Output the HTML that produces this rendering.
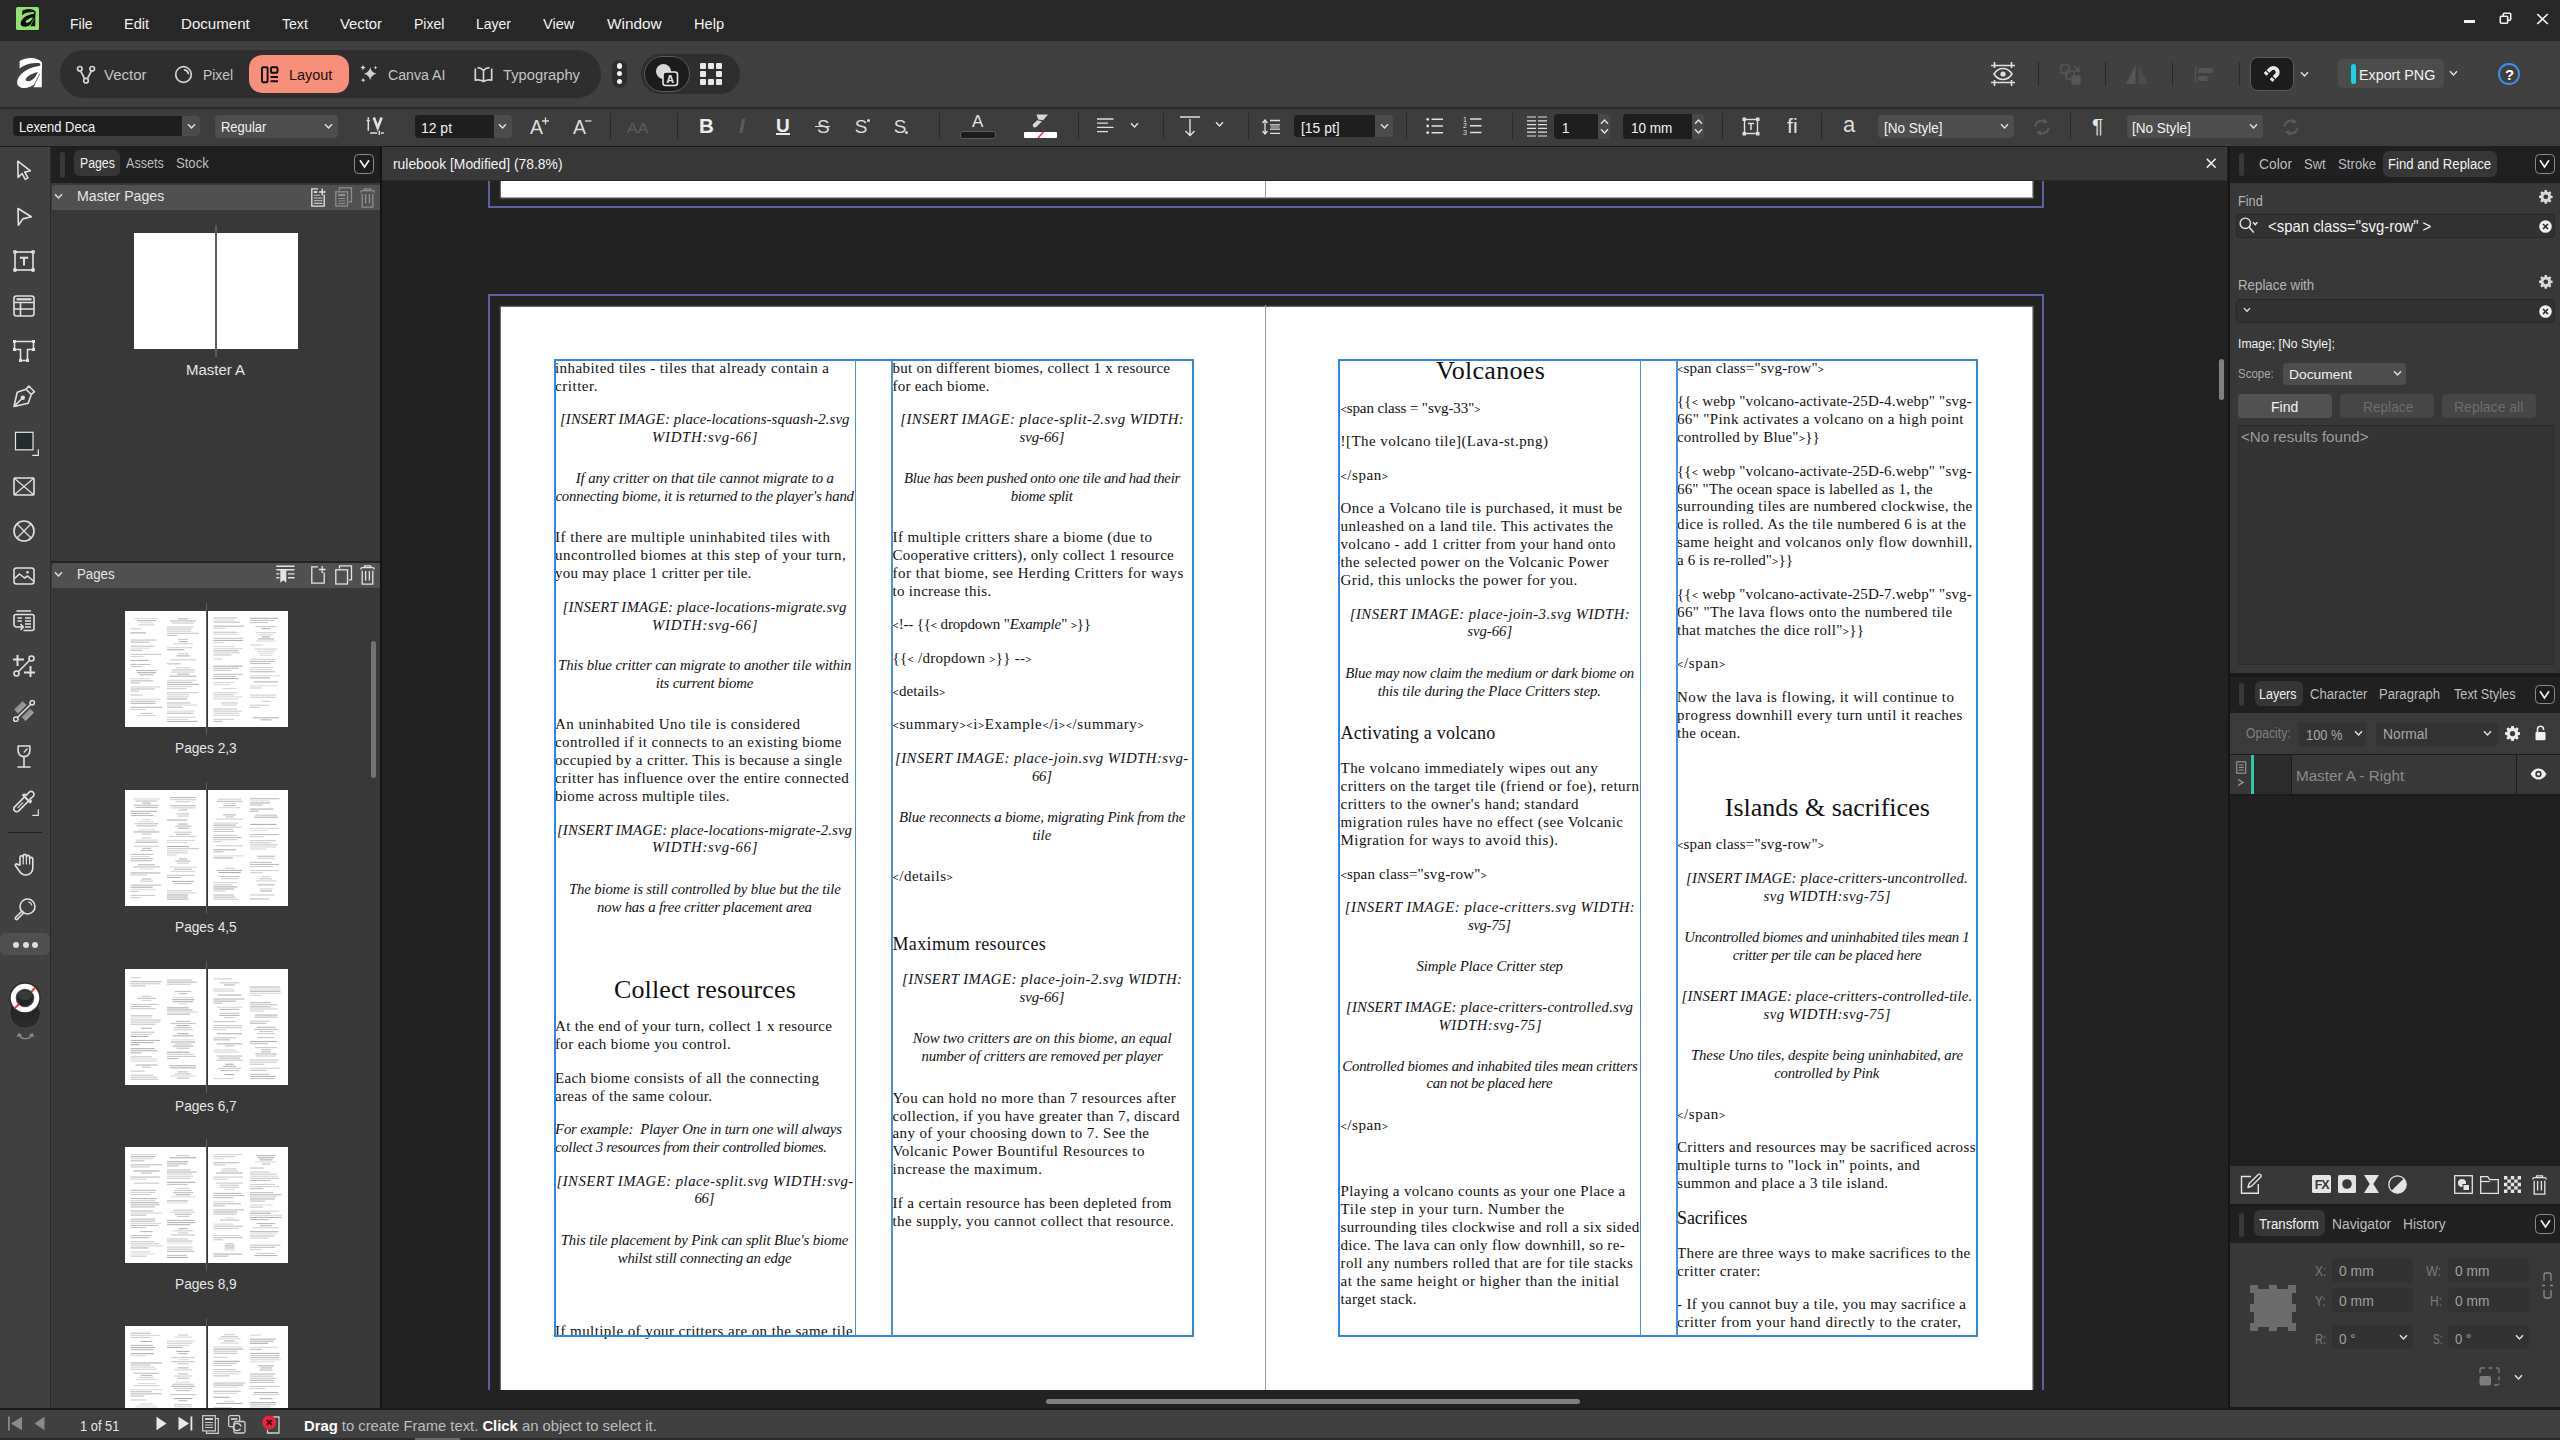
<!DOCTYPE html>
<html lang="en"><head><meta charset="utf-8"><title>rulebook</title>
<style>
html,body{margin:0;padding:0}
body{width:2560px;height:1440px;overflow:hidden;background:#222;position:relative;font-family:"Liberation Sans",sans-serif}
.abs{position:absolute}
.t{position:absolute;white-space:pre;line-height:20px;height:20px;transform-origin:0 50%}
.u{font-family:"Liberation Sans",sans-serif}
.d{font-family:"Liberation Serif",serif;color:#111}
.d.i{font-style:italic}
.bl{display:inline-block;width:0;height:0}
.d s{text-decoration:none;font-size:11px;vertical-align:.5px;font-weight:bold}
.u b{color:#fff}
.dot{width:5.400px;height:5.400px;border-radius:50%;background:#f4f4f4}
.vs{width:1.3px;background:#2a2a2a}
.chev{fill:none;stroke:#e0e0e0;stroke-width:1.5}
.fld{background:#1e1e1e}
.ddb{background:#4b4b4b}
.dd{background:#4d4d4d;border-radius:4px}
.spn{background:#484848;border-radius:0 4px 4px 0}
.tl{fill:none;stroke:#e0e0e0;stroke-width:1.6}
.cbx{width:20px;height:19.5px;border:1.3px solid #8a8a8a;border-radius:4.5px;box-sizing:border-box;background:#1c1c1c}
.inp{background:#323232;border:1px solid #272727;border-radius:4px;box-sizing:border-box}
.gear{fill:#d8d8d8}
.tf{width:81px;height:24.200px;background:#323232;border-radius:4px}
.fr{border:2px solid #2f86ea;box-sizing:border-box}
.fc{width:1.5px;background:#4a90e2}
.pg{position:absolute;background:#fff;overflow:hidden}
</style></head>
<body>

<!-- ===== top bars ===== -->
<div class="abs" style="left:0;top:0;width:2560px;height:41px;background:#272727"></div>
<div class="abs" style="left:0;top:41px;width:2560px;height:66px;background:#404040"></div>
<div class="abs" style="left:0;top:107px;width:2560px;height:1.5px;background:#2a2a2a"></div>
<div class="abs" style="left:0;top:108.5px;width:2560px;height:37px;background:#3d3d3d"></div>
<div class="abs" style="left:0;top:145.5px;width:2560px;height:1.5px;background:#1d1d1d"></div>
<!-- app logo -->
<div class="abs" style="left:16px;top:7px;width:23px;height:23px;background:#8fe36e;border-radius:1.5px"></div>
<svg class="abs" style="left:20px;top:9.300px" width="16.300" height="17.700" viewBox="0 0 25.500 30"><path d="M2.600 3.100C6 1.200 10 0 13.900 0c5 0 9.200 1.600 11.300 4.800.6.900.5 1.600.3 2.600l-.7 4.600v17.300h-8.500l1.800-3.600c-3.200 2.800-7.600 4.600-12.300 4.200C1.700 29.500-.6 26.700.2 23.200c.5-2.100 1.200-3.600 2.200-5 2-2.600 4.600-4.600 7.300-6.200 3.600-2 8-3.300 11.300-3.700 1.500-.3 2.400-1 2.400-1.900 0-1-1.200-1.500-2.600-1.500-3.200 0-6.600.4-9.200 1-3.200.8-6.200 2.400-9 4.700z" fill="#0a0a0a"/><path d="M21 13.900c-4.600 1-10.400 3.600-12.200 6.900-.9 1.900.9 2.900 3.500 2.400 3.500-.8 7-5.200 8.700-9.300z" fill="#8fe36e"/><path d="M22.700 15.800L16.300 28.900" stroke="#8fe36e" stroke-width="1.1" fill="none"/></svg>
<!-- window controls -->
<div class="abs" style="left:2464px;top:19.5px;width:11px;height:3.5px;background:#f0f0f0"></div>
<svg class="abs" style="left:2499px;top:11.500px" width="13" height="13" viewBox="0 0 13 13" fill="none" stroke="#f0f0f0" stroke-width="1.6"><rect x="1.300" y="4.300" width="7.400" height="6.900" rx="1"/><path d="M4.300 4V2.300a1 1 0 0 1 1-1h5.400a1 1 0 0 1 1 1v4.900a1 1 0 0 1-1 1H9"/></svg>
<svg class="abs" style="left:2535.500px;top:12.500px" width="13" height="12" viewBox="0 0 13 12" fill="none" stroke="#f0f0f0" stroke-width="1.700"><path d="M1.200 1l10.600 10M11.800 1L1.200 11"/></svg>
<!-- persona bar -->
<svg class="abs" style="left:16.800px;top:58.200px" width="25.500" height="30" viewBox="0 0 25.500 30"><path d="M2.600 3.100C6 1.200 10 0 13.900 0c5 0 9.200 1.600 11.300 4.800.6.900.5 1.600.3 2.600l-.7 4.600v17.300h-8.500l1.800-3.600c-3.200 2.800-7.600 4.600-12.300 4.200C1.700 29.500-.6 26.700.2 23.200c.5-2.100 1.200-3.600 2.200-5 2-2.600 4.600-4.600 7.300-6.200 3.600-2 8-3.300 11.300-3.700 1.500-.3 2.400-1 2.400-1.900 0-1-1.200-1.500-2.600-1.500-3.200 0-6.600.4-9.200 1-3.200.8-6.200 2.400-9 4.700z" fill="#fff"/><path d="M21 13.900c-4.600 1-10.400 3.600-12.200 6.900-.9 1.900.9 2.900 3.500 2.400 3.500-.8 7-5.200 8.700-9.300z" fill="#404040"/><path d="M22.700 15.800L16.300 28.900" stroke="#404040" stroke-width="0.8" fill="none"/></svg>
<div class="abs" style="left:60px;top:50px;width:541px;height:48px;background:#2e2e2e;border-radius:24px"></div>
<div class="abs" style="left:249px;top:55.300px;width:100px;height:37.500px;background:#f78f7b;border-radius:13px"></div>
<div class="abs" style="left:612px;top:59.500px;width:15px;height:28px;background:#2e2e2e;border-radius:7.500px"></div>
<div class="abs dot" style="left:616.800px;top:63.200px"></div><div class="abs dot" style="left:616.800px;top:71px"></div><div class="abs dot" style="left:616.800px;top:78.600px"></div>
<div class="abs" style="left:641px;top:54px;width:99px;height:40px;background:#2e2e2e;border-radius:20px"></div>
<div class="abs" style="left:644px;top:56px;width:46px;height:36px;background:#1c1c1c;border:1.500px solid #5a5a5a;border-radius:18px;box-sizing:border-box"></div>
<!-- vector icon -->
<svg class="abs" style="left:76px;top:64.500px" width="20" height="20" viewBox="0 0 20 20" fill="none" stroke="#d4d4d4" stroke-width="1.700"><circle cx="3.800" cy="3.800" r="2.300"/><circle cx="16.200" cy="3.800" r="2.300"/><circle cx="10" cy="15.700" r="2.300"/><path d="M4.600 6l4 7.600M15.400 6l-4 7.600"/></svg>
<!-- pixel icon -->
<svg class="abs" style="left:174px;top:65px" width="19" height="19" viewBox="0 0 19 19" fill="none" stroke="#d4d4d4" stroke-width="1.700"><circle cx="9.500" cy="9.500" r="7.800"/><path d="M10.500 4.800c2 .3 3.600 1.900 3.900 3.900" stroke-linecap="round"/></svg>
<!-- layout icon -->
<svg class="abs" style="left:261px;top:66px" width="18" height="18" viewBox="0 0 18 18" fill="none" stroke="#111" stroke-width="1.900"><rect x="1" y="1.300" width="5.600" height="15" rx="1"/><rect x="10" y="1.300" width="6.500" height="5.500" rx="1"/><path d="M9.500 11h7.500M9.500 15.300h7.500"/></svg>
<!-- canva ai -->
<svg class="abs" style="left:359px;top:64px" width="20" height="20" viewBox="0 0 20 20" fill="#d2d2d2"><path d="M11.200 3c.6 3.600 2.400 5.600 6.300 6.700-3.900 1.100-5.700 3.100-6.300 6.800-.6-3.700-2.400-5.700-6.300-6.800 3.900-1.100 5.700-3.100 6.300-6.700z"/><path d="M4 .5c.3 1.700 1.100 2.600 2.900 3.100C5.100 4.100 4.300 5 4 6.700 3.700 5 2.900 4.100 1.100 3.600 2.900 3.100 3.700 2.200 4 .5zM16.500 1.500c.2 1.200.8 1.800 2 2.100-1.200.3-1.800.9-2 2.100-.2-1.200-.8-1.800-2-2.100 1.200-.3 1.800-.9 2-2.100zM4.200 13.800c.2 1.300.9 2 2.300 2.400-1.400.4-2.100 1.100-2.300 2.400-.2-1.300-.9-2-2.300-2.400 1.400-.4 2.100-1.100 2.300-2.400z"/></svg>
<!-- typography -->
<svg class="abs" style="left:474px;top:66px" width="19" height="17" viewBox="0 0 19 17" fill="none" stroke="#d4d4d4" stroke-width="1.700" stroke-linejoin="round"><path d="M1.300 2.500v11.700c3-.6 5.600-.2 8.200 1.300 2.600-1.500 5.200-1.900 8.200-1.300V2.500M9.500 15.500V4.300M9.500 4.300C7.500 2.500 5 1.700 3.500 1.700M9.500 4.300c2-1.800 4.500-2.600 6-2.600"/></svg>
<!-- studio toggles -->
<svg class="abs" style="left:655px;top:63px" width="26" height="24" viewBox="0 0 26 24"><circle cx="8.500" cy="8.500" r="7.500" fill="#d8d8d8"/><rect x="8" y="9" width="14.500" height="13.500" rx="2.500" fill="#1c1c1c" stroke="#e8e8e8" stroke-width="1.600"/><text x="15.200" y="20.300" style="font-family:'Liberation Sans',sans-serif" font-size="11" font-weight="bold" fill="#e8e8e8" text-anchor="middle">A</text></svg>
<svg class="abs" style="left:700px;top:63px" width="22" height="22" viewBox="0 0 22 22" fill="#e8e8e8"><rect x="0" y="0" width="6" height="6" rx="1"/><rect x="8" y="0" width="6" height="6" rx="1"/><rect x="16" y="0" width="6" height="6" rx="1"/><rect x="0" y="8" width="6" height="6" rx="1"/><rect x="16" y="8" width="6" height="6" rx="1"/><rect x="0" y="16" width="6" height="6" rx="1"/><rect x="8" y="16" width="6" height="6" rx="1"/><rect x="16" y="16" width="6" height="6" rx="1"/></svg>
<!-- right of persona bar -->
<svg class="abs" style="left:1991px;top:62px" width="24" height="24" viewBox="0 0 24 24" fill="none" stroke="#e0e0e0" stroke-width="1.600"><path d="M0 3.500h24M0 20.500h24M3.500 0v6M20.500 0v6M3.500 18v6M20.500 18v6"/><path d="M3 12c2.500-4 5.500-5.500 9-5.500s6.500 1.500 9 5.500c-2.500 4-5.500 5.500-9 5.500S5.500 16 3 12z" fill="#404040"/><circle cx="12" cy="12" r="2.600" fill="#e0e0e0" stroke="none"/></svg>
<div class="abs vs" style="left:2038px;top:62px;height:24px"></div>
<div class="abs vs" style="left:2105px;top:62px;height:24px"></div>
<div class="abs vs" style="left:2172px;top:62px;height:24px"></div>
<div class="abs vs" style="left:2239px;top:62px;height:24px"></div>
<svg class="abs" style="left:2060px;top:64px" width="21" height="21" viewBox="0 0 21 21" fill="none" stroke="#565656" stroke-width="1.500"><rect x="1" y="1" width="8" height="8" rx="1"/><rect x="6" y="7" width="8" height="8" rx="1"/><rect x="12" y="12" width="8" height="8" rx="1" fill="#565656"/><path d="M14 2l5 5M19 3v4h-4"/></svg>
<svg class="abs" style="left:2126px;top:65px" width="22" height="19" viewBox="0 0 22 19"><path d="M9.500 0v19H0z" fill="#565656"/><path d="M12.500 0v19H22z" fill="#4b4b4b"/></svg>
<svg class="abs" style="left:2195px;top:66px" width="19" height="17" viewBox="0 0 19 17" fill="#545454"><rect x="0" y="0" width="1.300" height="17"/><rect x="3" y="2" width="15" height="5" rx="1.500"/><rect x="3" y="10" width="9.500" height="5" rx="1.500"/></svg>
<div class="abs" style="left:2250.200px;top:57px;width:43.400px;height:34px;background:#1c1c1c;border:1.500px solid #5a5a5a;border-radius:8px;box-sizing:border-box"></div>
<svg class="abs" style="left:2261px;top:62px" width="22" height="22" viewBox="0 0 22 22" fill="none"><g transform="rotate(45 12.400 10.200)"><path d="M8.100 17.700V10.200a4.300 4.300 0 0 1 8.600 0v7.500" stroke="#e8e8e8" stroke-width="3.900"/><path d="M5.600 14.100h5M14.200 14.100h5" stroke="#1c1c1c" stroke-width="1.200"/></g></svg>
<svg class="abs chev" style="left:2299.500px;top:70.500px" width="9" height="7" viewBox="0 0 9 7"><path d="M1 1.300l3.500 3.700L8 1.300"/></svg>
<div class="abs" style="left:2338px;top:59px;width:106px;height:29px;background:#4c4c4c;border-radius:5px"></div>
<div class="abs" style="left:2350.500px;top:63.700px;width:5.500px;height:20px;background:#19d3e9;border-radius:2.700px"></div>
<svg class="abs chev" style="left:2448.500px;top:69.500px" width="9" height="7" viewBox="0 0 9 7"><path d="M1 1.300l3.500 3.700L8 1.300"/></svg>
<div class="abs" style="left:2498px;top:63.300px;width:21.500px;height:21.500px;border:2px solid #3b8fee;border-radius:50%;box-sizing:border-box"></div>

<!-- ===== context toolbar ===== -->
<div class="abs fld" style="left:13px;top:116px;width:169px;height:20px;border-radius:4px 0 0 4px"></div>
<div class="abs ddb" style="left:182px;top:116px;width:18px;height:20px;border-radius:0 4px 4px 0"></div>
<svg class="abs chev" style="left:186.500px;top:123px" width="9" height="7" viewBox="0 0 9 7"><path d="M1 1.300l3.500 3.700L8 1.300"/></svg>
<div class="abs dd" style="left:215px;top:115px;width:122.500px;height:22.500px"></div>
<svg class="abs chev" style="left:324px;top:123px" width="9" height="7" viewBox="0 0 9 7"><path d="M1 1.300l3.500 3.700L8 1.300"/></svg>
<!-- kerning icon -->
<svg class="abs" style="left:366px;top:116px" width="19" height="20" viewBox="0 0 19 20" fill="none" stroke="#e0e0e0" stroke-width="1.500"><path d="M2.300 1.200v2.300M2.300 5.300v9.400M.6 4.400h3.200"/><path d="M7.800 1.600l3.900 10.200 3.900-10.200" stroke-width="2.700"/><path d="M4.200 17h6.800M13.300 14.700v4.200M15 17h2.800"/></svg>
<div class="abs fld" style="left:414.500px;top:115px;width:79px;height:22.500px;border-radius:4px 0 0 4px"></div>
<div class="abs ddb" style="left:493.500px;top:115px;width:18.500px;height:22.500px;border-radius:0 4px 4px 0"></div>
<svg class="abs chev" style="left:498px;top:123px" width="9" height="7" viewBox="0 0 9 7"><path d="M1 1.300l3.500 3.700L8 1.300"/></svg>
<!-- A+ A- marks -->
<svg class="abs" style="left:541.500px;top:117px" width="8" height="8" viewBox="0 0 8 8" stroke="#dcdcdc" stroke-width="1.300"><path d="M0 4h7M3.500 .5v7"/></svg>
<svg class="abs" style="left:584.500px;top:120.300px" width="7" height="2" viewBox="0 0 7 2" stroke="#dcdcdc" stroke-width="1.300"><path d="M0 1h6.500"/></svg>
<div class="abs vs" style="left:610px;top:113px;height:26px"></div>
<div class="abs vs" style="left:677px;top:113px;height:26px"></div>
<div class="abs" style="left:776px;top:133.300px;width:14px;height:1.500px;background:#ececec"></div>
<div class="abs" style="left:815px;top:125.500px;width:14.500px;height:1.400px;background:#dcdcdc"></div>
<div class="abs" style="left:866.500px;top:118.500px;width:3.200px;height:3.200px;border-radius:50%;background:#dcdcdc"></div>
<div class="abs" style="left:905px;top:130.500px;width:3.200px;height:3.200px;border-radius:50%;background:#dcdcdc"></div>
<div class="abs vs" style="left:939px;top:113px;height:26px"></div>
<div class="abs" style="left:960px;top:131px;width:36px;height:8px;background:#1c1c1c;border:1.300px solid #5c5c5c;border-radius:3px;box-sizing:border-box"></div>
<!-- highlighter -->
<svg class="abs" style="left:1030px;top:113.500px" width="20" height="14" viewBox="0 0 20 14" fill="#d8d8d8"><path d="M6.500 .5h11.500l-4.800 5.800-5-.8z"/><path d="M7.200 6.300l4.800 1-5.500 5.400c-1 .9-2.500.9-3.300 0-.8-.9-.6-2.200.2-3z"/></svg>
<svg class="abs" style="left:1023.500px;top:132.300px" width="33" height="6" viewBox="0 0 33 6"><rect width="33" height="6" rx="1" fill="#fff"/><path d="M14 6L19.500 0" stroke="#e8333c" stroke-width="1.500"/></svg>
<div class="abs vs" style="left:1078px;top:113px;height:26px"></div>
<svg class="abs" style="left:1096.500px;top:117.500px" width="17" height="15" viewBox="0 0 17 15" stroke="#e0e0e0" stroke-width="1.300"><path d="M0 1h16.500M0 5.200h11M0 9.400h16.500M0 13.600h11"/></svg>
<svg class="abs chev" style="left:1129.500px;top:121.500px" width="9" height="7" viewBox="0 0 9 7"><path d="M1 1.300l3.500 3.700L8 1.300"/></svg>
<div class="abs vs" style="left:1163px;top:113px;height:26px"></div>
<svg class="abs" style="left:1180px;top:115.500px" width="20" height="21" viewBox="0 0 20 21" fill="none" stroke="#e0e0e0" stroke-width="1.400"><path d="M0 1h20M10 3v16.500M5.500 15l4.500 4.600 4.500-4.600"/></svg>
<svg class="abs chev" style="left:1214.500px;top:120.500px" width="9" height="7" viewBox="0 0 9 7"><path d="M1 1.300l3.500 3.700L8 1.300"/></svg>
<div class="abs vs" style="left:1248px;top:113px;height:26px"></div>
<svg class="abs" style="left:1261.500px;top:118.500px" width="18" height="16" viewBox="0 0 18 16" fill="none" stroke="#e0e0e0" stroke-width="1.300"><path d="M3 1.500v13M.5 4l2.500-3 2.500 3M.5 12l2.500 3 2.500-3"/><path d="M8 1.500h10M8 5.800h10M8 10.100h10M8 14.400h10"/><path d="M8.500 7.950h9" stroke="#8a8a8a" stroke-width="2.600"/></svg>
<div class="abs fld" style="left:1294px;top:115px;width:81px;height:22px;border-radius:4px 0 0 4px"></div>
<div class="abs ddb" style="left:1375px;top:115px;width:18px;height:22px;border-radius:0 4px 4px 0"></div>
<svg class="abs chev" style="left:1379.500px;top:122.500px" width="9" height="7" viewBox="0 0 9 7"><path d="M1 1.300l3.500 3.700L8 1.300"/></svg>
<div class="abs vs" style="left:1406px;top:113px;height:26px"></div>
<svg class="abs" style="left:1425.500px;top:116.500px" width="17" height="18" viewBox="0 0 17 18" stroke="#e0e0e0" stroke-width="1.500" fill="#e0e0e0"><circle cx="1.700" cy="2.300" r="1.400" stroke="none"/><circle cx="1.700" cy="9" r="1.400" stroke="none"/><circle cx="1.700" cy="15.700" r="1.400" stroke="none"/><path d="M5.500 2.300h11.500M5.500 9h11.500M5.500 15.700h11.500"/></svg>
<svg class="abs" style="left:1463px;top:115px" width="19" height="21" viewBox="0 0 19 21" stroke="#e0e0e0" stroke-width="1.500"><path d="M7 4h11.500M7 10.700h11.500M7 17.400h11.500"/><text x="0" y="6.500" style="font-family:'Liberation Sans',sans-serif" font-size="7" fill="#e0e0e0" stroke="none">1</text><text x="0" y="13.300" style="font-family:'Liberation Sans',sans-serif" font-size="7" fill="#e0e0e0" stroke="none">2</text><text x="0" y="20" style="font-family:'Liberation Sans',sans-serif" font-size="7" fill="#e0e0e0" stroke="none">3</text></svg>
<div class="abs vs" style="left:1512px;top:113px;height:26px"></div>
<svg class="abs" style="left:1527px;top:115.500px" width="20" height="21" viewBox="0 0 20 21" stroke="#e0e0e0" stroke-width="1.200"><path d="M0 1h9M11 1h9M0 4.800h9M11 4.800h9M0 8.600h9M11 8.600h9M0 12.400h9M11 12.400h9M0 16.200h9M11 16.200h9M0 20h9M11 20h9"/></svg>
<div class="abs fld" style="left:1554px;top:114px;width:44px;height:24.500px;border-radius:4px 0 0 4px"></div>
<div class="abs spn" style="left:1598px;top:114px;width:11.500px;height:24.500px"></div>
<svg class="abs chev" style="left:1599.500px;top:118px" width="9" height="17" viewBox="0 0 9 17"><path d="M1 5.700l3.500-3.700L8 5.700M1 11.300l3.500 3.700L8 11.300"/></svg>
<div class="abs fld" style="left:1623px;top:114px;width:69px;height:24.500px;border-radius:4px 0 0 4px"></div>
<div class="abs spn" style="left:1692px;top:114px;width:12px;height:24.500px"></div>
<svg class="abs chev" style="left:1693.500px;top:118px" width="9" height="17" viewBox="0 0 9 17"><path d="M1 5.700l3.500-3.700L8 5.700M1 11.300l3.500 3.700L8 11.300"/></svg>
<div class="abs vs" style="left:1722px;top:113px;height:26px"></div>
<svg class="abs" style="left:1741.500px;top:117px" width="18" height="19" viewBox="0 0 18 19" fill="none" stroke="#e0e0e0" stroke-width="1.400"><rect x="2.500" y="2.500" width="13" height="14"/><rect x=".5" y=".5" width="3.500" height="3.500" fill="#e0e0e0" stroke="none"/><rect x="14" y=".5" width="3.500" height="3.500" fill="#e0e0e0" stroke="none"/><rect x=".5" y="15" width="3.500" height="3.500" fill="#e0e0e0" stroke="none"/><rect x="14" y="15" width="3.500" height="3.500" fill="#e0e0e0" stroke="none"/><path d="M6 6.500h6M9 6.500v6.500" stroke-width="1.500"/></svg>
<div class="abs vs" style="left:1821px;top:113px;height:26px"></div>
<div class="abs dd" style="left:1878px;top:115px;width:136px;height:23px"></div>
<svg class="abs chev" style="left:2000px;top:123px" width="9" height="7" viewBox="0 0 9 7"><path d="M1 1.300l3.500 3.700L8 1.300"/></svg>
<svg class="abs" style="left:2033px;top:116.500px" width="18" height="20" viewBox="0 0 18 20" fill="none" stroke="#5a5a5a" stroke-width="2"><path d="M2.300 9.500a6.800 6.800 0 0 1 11.500-4M15.700 10.500a6.800 6.800 0 0 1-11.500 4"/><path d="M10.500 1l4 4.300-4.600 1.500zM7.500 19l-4-4.300 4.600-1.500z" fill="#5a5a5a" stroke="none"/></svg>
<div class="abs vs" style="left:2070px;top:113px;height:26px"></div>
<div class="abs dd" style="left:2127px;top:115px;width:136px;height:23px"></div>
<svg class="abs chev" style="left:2249px;top:123px" width="9" height="7" viewBox="0 0 9 7"><path d="M1 1.300l3.500 3.700L8 1.300"/></svg>
<svg class="abs" style="left:2282px;top:116.500px" width="18" height="20" viewBox="0 0 18 20" fill="none" stroke="#5a5a5a" stroke-width="2"><path d="M2.300 9.500a6.800 6.800 0 0 1 11.500-4M15.700 10.500a6.800 6.800 0 0 1-11.500 4"/><path d="M10.500 1l4 4.300-4.600 1.500zM7.500 19l-4-4.300 4.600-1.500z" fill="#5a5a5a" stroke="none"/></svg>

<!-- ===== tool column ===== -->
<div class="abs" style="left:0;top:147px;width:50px;height:1261px;background:#404040"></div>
<div class="abs" style="left:50px;top:147px;width:1.200px;height:1261px;background:#2a2a2a"></div>

<svg class="abs tl" style="left:13px;top:159px" width="24" height="24" viewBox="0 0 24 24"><path d="M4.800 2.200l12.600 9.600-5.600 1.300 3.100 5.800-2.700 1.500-3.100-5.900-4 3.900z" stroke-linejoin="round"/></svg>
<svg class="abs tl" style="left:13px;top:205px" width="24" height="24" viewBox="0 0 24 24"><path d="M5 3.500l13.400 8.200-8.600 2.200-4.400 6.300z" stroke-linejoin="round"/></svg>
<svg class="abs tl" style="left:13px;top:250px" width="22" height="22" viewBox="0 0 22 22"><rect x="2" y="2" width="18" height="18"/><g fill="#e0e0e0" stroke="none"><circle cx="2" cy="2" r="2"/><circle cx="20" cy="2" r="2"/><circle cx="2" cy="20" r="2"/><circle cx="20" cy="20" r="2"/></g><path d="M6.800 7.700h8.400M11 7.700v7.800" stroke-width="2"/></svg>
<svg class="abs tl" style="left:13px;top:295px" width="22" height="22" viewBox="0 0 22 22"><rect x="1" y="1" width="20" height="20" rx="2.500"/><path d="M1 7.500h20M1 14h20M7.500 7.500V21"/><path d="M3.500 4.300h15" stroke-width="2.200"/></svg>
<svg class="abs tl" style="left:13px;top:340px" width="22" height="22" viewBox="0 0 22 22" stroke-width="1.500"><path d="M1.500 1.500h19v8h-6v11h-7v-11h-6z"/><g fill="#e0e0e0" stroke="none"><rect x="0" y="0" width="3" height="3"/><rect x="19" y="0" width="3" height="3"/><rect x="0" y="8" width="3" height="3"/><rect x="19" y="8" width="3" height="3"/><rect x="6" y="19" width="3" height="3"/><rect x="13" y="19" width="3" height="3"/></g></svg>
<svg class="abs tl" style="left:13px;top:385px" width="23" height="23" viewBox="0 0 23 23" stroke-linejoin="round"><path d="M13 4.200L15.800 1l5.700 5.700-3.200 2.800zM13 4.200L4.200 7.300 1 21.500l14.200-3.200 3.100-8.800M1.500 21l8-8"/><circle cx="9.800" cy="12.700" r="1.400" fill="#e0e0e0"/></svg>
<svg class="abs" style="left:14px;top:431px" width="26" height="26" viewBox="0 0 26 26"><rect x="1.500" y="1.300" width="17.500" height="17.500" fill="#252c2f" stroke="#e6e6e6" stroke-width="1.200"/><path d="M18.300 24.300h6v-6" fill="none" stroke="#e6e6e6" stroke-width="1.200"/></svg>
<svg class="abs tl" style="left:13px;top:476.500px" width="22" height="19" viewBox="0 0 22 19"><rect x="1" y="1" width="20" height="17" rx="1"/><path d="M1 1l20 17M21 1L1 18" stroke-width="1.200"/></svg>
<svg class="abs tl" style="left:13px;top:520px" width="22" height="22" viewBox="0 0 22 22"><circle cx="11" cy="11" r="10"/><path d="M4 4l14 14M18 4L4 18" stroke-width="1.200"/></svg>
<svg class="abs tl" style="left:13px;top:567px" width="22" height="18" viewBox="0 0 22 18"><rect x="1" y="1" width="20" height="16" rx="2.500"/><path d="M1.500 11.500l5-4.500 5 4 3-2 6 5" stroke-linejoin="round"/><circle cx="14.500" cy="5.300" r="1.300" fill="#e0e0e0" stroke="none"/></svg>
<svg class="abs tl" style="left:13px;top:610px" width="22" height="22" viewBox="0 0 22 22"><path d="M3.500 1h14.500M10.500 20.500h8.500a2 2 0 0 0 2-2V6.500a2 2 0 0 0-2-2H3a2 2 0 0 0-2 2v8a2.500 2.500 0 0 0 2.500 2.500h6.500"/><path d="M7.500 14l2.800 3-2.800 3" stroke-linejoin="round"/><path d="M4.500 8h4.500M4.500 11h4.500M12 8h6M12 11h6M12 14h6M12 17h6" stroke-width="1.300"/></svg>
<svg class="abs tl" style="left:13px;top:655px" width="22" height="22" viewBox="0 0 22 22"><path d="M0 4.500h11M4.500 0v11M11 17.500h11M17.500 11v11" stroke-width="2"/><circle cx="18.500" cy="3.500" r="2.500"/><circle cx="3.500" cy="18.500" r="2.500"/><path d="M5.300 16.700L16.700 5.300"/></svg>
<svg class="abs" style="left:13px;top:699.500px" width="22" height="22" viewBox="0 0 22 22"><defs><linearGradient id="gq" x1="0" y1="0" x2="1" y2="1"><stop offset="0" stop-color="#6a6a6a"/><stop offset="1" stop-color="#e0e0e0"/></linearGradient></defs><path d="M1 9.500L9.500 1l4 4L5 13.500z" fill="url(#gq)" opacity=".85"/><path d="M8.500 17L17 8.500l4 4L12.500 21z" fill="url(#gq)" opacity=".85"/><g fill="#404040" stroke="#e0e0e0" stroke-width="1.500"><path d="M4.200 17.800L17.800 4.200"/><circle cx="19.200" cy="2.800" r="2.200"/><circle cx="2.800" cy="19.200" r="2.200"/></g></svg>
<svg class="abs tl" style="left:16px;top:744.500px" width="16" height="23" viewBox="0 0 16 23"><path d="M2.300 1h11.400c.8 5.500-.2 10.500-5.700 10.500S1.500 6.500 2.300 1zM8 11.500V22M1.500 22h13"/><path d="M11.500 3.500L7.800 7.500" stroke-width="1.300"/></svg>
<svg class="abs tl" style="left:13px;top:789.500px" width="27" height="27" viewBox="0 0 27 27"><g transform="translate(-.8 -1.300) scale(1.120)" stroke-width="1.450"><path d="M11.200 7.200l3.600 3.600-9 9c-1 1-2.600 1-3.600 0s-1-2.600 0-3.600z"/><path d="M9.500 5.800c.8-.8 2-.8 2.800 0l.3.300 2.200-2.700c1-1.200 2.800-1.300 3.900-.2s1 2.900-.2 3.900l-2.700 2.200.3.300c.8.800.8 2 0 2.800z" stroke-linejoin="round"/><path d="M4.800 17.300l5-5" stroke-width="1"/></g><path d="M19.300 25.300h6v-6" stroke-width="1.200"/></svg>
<div class="abs" style="left:8px;top:832px;width:34px;height:1.200px;background:#1f1f1f"></div>
<svg class="abs tl" style="left:13.500px;top:852.500px" width="21" height="23" viewBox="0 0 21 23" stroke-linejoin="round" stroke-linecap="round"><path d="M6 12V4.300a1.600 1.600 0 0 1 3.200 0V3a1.600 1.600 0 0 1 3.200 0v1a1.600 1.600 0 0 1 3.200 0v2a1.600 1.600 0 0 1 3.200 0V15c0 4-2.800 7-7 7-3.300 0-5-1.500-6.500-4L1.500 12.800c-.7-1.300.8-2.500 2-1.400z"/><path d="M9.200 4.300V11M12.400 4V11M15.600 6V11" stroke-width="1.200"/></svg>
<svg class="abs tl" style="left:12.500px;top:897.500px" width="23" height="23" viewBox="0 0 23 23"><circle cx="14.500" cy="8.500" r="7.500"/><path d="M9 13l1.800 1.800-6.300 6.300c-.5.500-1.300.5-1.800 0s-.5-1.300 0-1.800z" stroke-linejoin="round"/><path d="M15.500 4c1.700.3 3 1.600 3.300 3.200" stroke-width="1.200" stroke-linecap="round"/></svg>

<div class="abs" style="left:0;top:933px;width:50px;height:22px;background:#4f4f4f;border-radius:6px"></div>
<div class="abs" style="left:13px;top:942px;width:6px;height:6px;border-radius:50%;background:#dcdcdc"></div>
<div class="abs" style="left:22.500px;top:942px;width:6px;height:6px;border-radius:50%;background:#dcdcdc"></div>
<div class="abs" style="left:32px;top:942px;width:6px;height:6px;border-radius:50%;background:#dcdcdc"></div>
<!-- colour swatches -->
<svg class="abs" style="left:8px;top:981px" width="34" height="50" viewBox="0 0 34 50"><defs><linearGradient id="gsw" x1="0" y1="0" x2="0" y2="1"><stop offset="0" stop-color="#202020"/><stop offset="1" stop-color="#2c2c2c"/></linearGradient></defs><circle cx="17" cy="32" r="15.500" fill="url(#gsw)" stroke="#4a4a4a" stroke-width="1"/><circle cx="17" cy="17" r="15.800" fill="#2c2c2c"/><circle cx="17" cy="17" r="14.300" fill="#fff"/><path d="M6.500 27.500L27.500 6.500" stroke="#f0323c" stroke-width="2"/><circle cx="17" cy="17" r="9.300" fill="#4a4a4a"/><circle cx="17" cy="17" r="8" fill="#222"/><ellipse cx="17" cy="14.500" rx="7" ry="4.500" fill="#3a3a3a"/></svg>
<svg class="abs" style="left:16.500px;top:1032px" width="17" height="10" viewBox="0 0 17 10" fill="none" stroke="#909090" stroke-width="1.300"><path d="M2 2.500c2 5.500 11 5.500 13 0"/><path d="M.5 5l1.300-3 2.800 1.500M12.400 3.500L15.200 2l1.300 3"/></svg>

<!-- ===== left panel ===== -->
<div class="abs" style="left:51px;top:147px;width:329px;height:36px;background:#202020"></div>
<div class="abs" style="left:51px;top:183px;width:329px;height:1225px;background:#383838"></div>
<div class="abs" style="left:380px;top:147px;width:2px;height:1261px;background:#131313"></div>
<div class="abs" style="left:59.500px;top:152px;width:5.500px;height:25.500px;background:#383838;border-radius:3px"></div>
<div class="abs" style="left:74px;top:150px;width:46px;height:26px;background:#363636;border-radius:6px"></div>
<div class="abs cbx" style="left:354px;top:154px"></div>
<svg class="abs" style="left:358.500px;top:159px" width="11" height="10" viewBox="0 0 11 10" fill="none" stroke="#f0f0f0" stroke-width="1.700"><path d="M1 1.300l4.500 6.700L10 1.300"/></svg>
<!-- Master pages header -->
<div class="abs" style="left:51.500px;top:184.500px;width:328.500px;height:25.500px;background:#505050;border-radius:3px 0 0 0"></div>
<svg class="abs chev" style="left:54px;top:193px" width="9" height="7" viewBox="0 0 9 7"><path d="M1 1.300l3.500 3.700L8 1.300"/></svg>
<svg class="abs" style="left:310.500px;top:187.500px" width="15" height="19" viewBox="0 0 15 19" fill="none" stroke="#e4e4e4" stroke-width="1.300"><path d="M7 .8H.8v17.400h12.400V6.500"/><path d="M8 4h6.500M11.200 .5v7" /><path d="M2.800 4h3.500" stroke-width="1.800"/><path d="M2.800 7.300h6M2.800 10h8.600M2.800 12.700h8.600M2.800 15.400h8.600" stroke="#c4c4c4" stroke-width="1.100"/></svg>
<svg class="abs" style="left:335px;top:186.500px" width="18" height="20" viewBox="0 0 18 20" fill="none" stroke="#8e8e8e" stroke-width="1.300"><path d="M4.500 3.500V.8h12v14h-2.700"/><rect x=".8" y="4.800" width="11.700" height="14.200"/><path d="M3.200 8h7" stroke-width="2.400"/><path d="M3.200 11.500h7M3.200 14h7M3.200 16.500h7" stroke-width="1.100"/></svg>
<svg class="abs" style="left:360px;top:187.500px" width="15" height="20" viewBox="0 0 15 20" fill="none" stroke="#8e8e8e" stroke-width="1.300"><path d="M.7 4.500c0-1.300.6-1.800 1.800-1.800h10c1.200 0 1.800.5 1.800 1.800M4.500 2.700V.8h6v1.900M2.200 5.800v13.400h10.600V5.800M5.600 6v9.500M9.400 6v9.500"/></svg>
<!-- master thumbnail -->
<div class="abs" style="left:215.300px;top:225px;width:1.700px;height:132px;background:#5c5c5c"></div>
<div class="abs" style="left:134px;top:233px;width:81.300px;height:116px;background:#fff"></div>
<div class="abs" style="left:217px;top:233px;width:80.800px;height:116px;background:#fff"></div>
<!-- Pages header -->
<div class="abs" style="left:51px;top:561px;width:329px;height:2px;background:#222"></div>
<div class="abs" style="left:51.500px;top:563px;width:328.500px;height:24.500px;background:#505050;border-radius:3px 0 0 0"></div>
<svg class="abs chev" style="left:54px;top:571px" width="9" height="7" viewBox="0 0 9 7"><path d="M1 1.300l3.500 3.700L8 1.300"/></svg>
<svg class="abs" style="left:276px;top:565px" width="19" height="19" viewBox="0 0 19 19" fill="none" stroke="#e4e4e4" stroke-width="1.400"><path d="M.3 1.200h18.200M.3 4.800h18.200M.3 8.900h3M12 8.900h6.500M.3 12.700h3M12 12.700h6.500"/><path d="M4.300 4.800h6v13l-3-2.500-3 2.500z" fill="#e4e4e4" stroke="none"/></svg>
<svg class="abs" style="left:310.500px;top:565px" width="15" height="19" viewBox="0 0 15 19" fill="none" stroke="#e4e4e4" stroke-width="1.300"><path d="M7 1.800H.8v16.400h12.400V7.500"/><path d="M8 4.500h6.500M11.200 1v7"/></svg>
<svg class="abs" style="left:335px;top:564.500px" width="18" height="20" viewBox="0 0 18 20" fill="none" stroke="#e4e4e4" stroke-width="1.300"><path d="M4.500 3.500V.8h12v14h-2.700"/><rect x=".8" y="4.800" width="11.700" height="14.200"/></svg>
<svg class="abs" style="left:360px;top:565px" width="15" height="20" viewBox="0 0 15 20" fill="none" stroke="#e4e4e4" stroke-width="1.300"><path d="M.7 4.500c0-1.300.6-1.800 1.800-1.800h10c1.200 0 1.800.5 1.800 1.800M4.500 2.700V.8h6v1.900M2.200 5.800v13.400h10.600V5.800M5.600 6v9.500M9.400 6v9.500"/></svg>
<div class="abs" style="left:371.300px;top:641px;width:4.700px;height:137px;background:#737373;border-radius:2.500px"></div>

<div class="abs" style="left:205.700px;top:603.0px;width:1.600px;height:132px;background:#5c5c5c"></div>
<svg class="abs" style="left:125px;top:611px;background:#fff" width="80.800" height="116" viewBox="0 0 80.800 116" fill="#444"><rect x="9.6" y="7.0" width="23.8" height="1.1" opacity="0.20"/><rect x="11.9" y="9.1" width="19.2" height="1.1" opacity="0.41"/><rect x="15.4" y="11.2" width="12.1" height="1.1" opacity="0.20"/><rect x="13.5" y="13.3" width="16.0" height="1.1" opacity="0.24"/><rect x="5.5" y="17.3" width="10.4" height="1.1" opacity="0.24"/><rect x="5.5" y="21.3" width="15.6" height="1.1" opacity="0.42"/><rect x="5.5" y="28.5" width="26.1" height="1.1" opacity="0.32"/><rect x="5.5" y="30.6" width="18.8" height="1.1" opacity="0.35"/><rect x="5.5" y="34.6" width="24.0" height="1.1" opacity="0.32"/><rect x="5.5" y="36.7" width="20.0" height="1.1" opacity="0.19"/><rect x="5.5" y="38.8" width="12.0" height="1.1" opacity="0.35"/><rect x="5.5" y="42.8" width="31.0" height="1.1" opacity="0.27"/><rect x="5.5" y="44.9" width="12.8" height="1.1" opacity="0.22"/><rect x="5.5" y="48.9" width="18.1" height="1.1" opacity="0.40"/><rect x="5.5" y="52.9" width="20.1" height="1.1" opacity="0.31"/><rect x="5.5" y="55.0" width="11.2" height="1.1" opacity="0.27"/><rect x="11.1" y="59.0" width="20.8" height="1.1" opacity="0.37"/><rect x="12.0" y="61.1" width="19.0" height="1.1" opacity="0.40"/><rect x="14.5" y="63.2" width="14.0" height="1.1" opacity="0.35"/><rect x="5.5" y="67.2" width="20.1" height="1.1" opacity="0.20"/><rect x="5.5" y="69.3" width="22.7" height="1.1" opacity="0.35"/><rect x="5.5" y="71.4" width="9.2" height="1.1" opacity="0.36"/><rect x="5.5" y="75.4" width="29.7" height="1.1" opacity="0.25"/><rect x="5.5" y="77.5" width="24.1" height="1.1" opacity="0.35"/><rect x="5.5" y="79.6" width="8.4" height="1.1" opacity="0.30"/><rect x="5.5" y="83.6" width="12.2" height="1.1" opacity="0.25"/><rect x="5.5" y="87.6" width="30.4" height="1.1" opacity="0.20"/><rect x="5.5" y="89.7" width="24.9" height="1.1" opacity="0.32"/><rect x="5.5" y="91.8" width="25.0" height="1.1" opacity="0.38"/><rect x="5.5" y="95.8" width="31.8" height="1.1" opacity="0.35"/><rect x="5.5" y="97.9" width="15.3" height="1.1" opacity="0.24"/><rect x="15.3" y="101.9" width="12.5" height="1.1" opacity="0.30"/><rect x="11.8" y="104.0" width="19.3" height="1.1" opacity="0.25"/><rect x="52.8" y="7.3" width="10.4" height="1.1" opacity="0.39"/><rect x="44.9" y="9.4" width="26.2" height="1.1" opacity="0.34"/><rect x="46.9" y="11.5" width="22.2" height="1.1" opacity="0.29"/><rect x="42.0" y="15.5" width="26.4" height="1.1" opacity="0.28"/><rect x="42.0" y="17.6" width="24.2" height="1.1" opacity="0.30"/><rect x="42.0" y="19.7" width="24.3" height="1.1" opacity="0.23"/><rect x="42.0" y="21.8" width="31.8" height="1.1" opacity="0.29"/><rect x="42.0" y="23.9" width="10.1" height="1.1" opacity="0.33"/><rect x="53.0" y="27.9" width="9.9" height="1.1" opacity="0.27"/><rect x="53.8" y="30.0" width="8.5" height="1.1" opacity="0.40"/><rect x="48.1" y="32.1" width="19.8" height="1.1" opacity="0.22"/><rect x="42.0" y="36.1" width="25.3" height="1.1" opacity="0.21"/><rect x="42.0" y="38.2" width="17.4" height="1.1" opacity="0.42"/><rect x="53.0" y="42.2" width="10.0" height="1.1" opacity="0.27"/><rect x="51.5" y="44.3" width="13.1" height="1.1" opacity="0.39"/><rect x="44.9" y="48.3" width="26.3" height="1.1" opacity="0.27"/><rect x="42.0" y="52.3" width="13.7" height="1.1" opacity="0.34"/><rect x="50.5" y="56.3" width="15.0" height="1.1" opacity="0.22"/><rect x="46.6" y="58.4" width="22.8" height="1.1" opacity="0.31"/><rect x="46.5" y="60.5" width="23.0" height="1.1" opacity="0.26"/><rect x="51.9" y="62.6" width="12.3" height="1.1" opacity="0.38"/><rect x="44.5" y="64.7" width="26.9" height="1.1" opacity="0.39"/><rect x="42.0" y="68.7" width="29.5" height="1.1" opacity="0.23"/><rect x="42.0" y="70.8" width="25.5" height="1.1" opacity="0.36"/><rect x="42.0" y="72.9" width="31.9" height="1.1" opacity="0.38"/><rect x="42.0" y="75.0" width="25.2" height="1.1" opacity="0.23"/><rect x="42.0" y="77.1" width="19.6" height="1.1" opacity="0.27"/><rect x="42.0" y="81.1" width="31.4" height="1.1" opacity="0.27"/><rect x="42.0" y="83.2" width="22.0" height="1.1" opacity="0.24"/><rect x="42.0" y="85.3" width="21.7" height="1.1" opacity="0.23"/><rect x="42.0" y="87.4" width="20.0" height="1.1" opacity="0.41"/><rect x="42.0" y="91.4" width="23.6" height="1.1" opacity="0.34"/><rect x="42.0" y="93.5" width="29.9" height="1.1" opacity="0.21"/><rect x="42.0" y="95.6" width="15.5" height="1.1" opacity="0.36"/><rect x="42.0" y="99.6" width="27.3" height="1.1" opacity="0.20"/><rect x="42.0" y="101.7" width="26.2" height="1.1" opacity="0.36"/><rect x="42.0" y="105.7" width="28.5" height="1.1" opacity="0.22"/><rect x="42.0" y="107.8" width="20.8" height="1.1" opacity="0.22"/><rect x="42.0" y="109.9" width="30.8" height="1.1" opacity="0.38"/></svg>
<svg class="abs" style="left:207.5px;top:611px;background:#fff" width="80.800" height="116" viewBox="0 0 80.800 116" fill="#444"><rect x="5.5" y="6.4" width="23.7" height="1.1" opacity="0.32"/><rect x="5.5" y="8.5" width="20.9" height="1.1" opacity="0.18"/><rect x="5.5" y="10.6" width="26.6" height="1.1" opacity="0.34"/><rect x="5.5" y="14.6" width="30.4" height="1.1" opacity="0.39"/><rect x="5.5" y="16.7" width="12.1" height="1.1" opacity="0.24"/><rect x="5.5" y="20.7" width="23.4" height="1.1" opacity="0.32"/><rect x="5.5" y="22.8" width="24.0" height="1.1" opacity="0.20"/><rect x="5.5" y="26.8" width="29.6" height="1.1" opacity="0.31"/><rect x="5.5" y="28.9" width="29.8" height="1.1" opacity="0.40"/><rect x="5.5" y="31.0" width="10.5" height="1.1" opacity="0.22"/><rect x="5.5" y="35.0" width="21.5" height="1.1" opacity="0.18"/><rect x="5.5" y="37.1" width="29.4" height="1.1" opacity="0.22"/><rect x="5.5" y="39.2" width="25.3" height="1.1" opacity="0.36"/><rect x="5.5" y="41.3" width="26.3" height="1.1" opacity="0.26"/><rect x="5.5" y="43.4" width="18.0" height="1.1" opacity="0.32"/><rect x="5.5" y="47.4" width="9.1" height="1.1" opacity="0.23"/><rect x="5.5" y="54.6" width="28.9" height="1.1" opacity="0.41"/><rect x="5.5" y="56.7" width="24.9" height="1.1" opacity="0.33"/><rect x="5.5" y="58.8" width="17.7" height="1.1" opacity="0.31"/><rect x="5.5" y="62.8" width="29.5" height="1.1" opacity="0.31"/><rect x="5.5" y="64.9" width="22.4" height="1.1" opacity="0.31"/><rect x="5.5" y="67.0" width="24.8" height="1.1" opacity="0.41"/><rect x="5.5" y="71.0" width="21.0" height="1.1" opacity="0.21"/><rect x="5.5" y="73.1" width="16.5" height="1.1" opacity="0.20"/><rect x="14.6" y="77.1" width="13.8" height="1.1" opacity="0.21"/><rect x="5.5" y="81.1" width="23.9" height="1.1" opacity="0.24"/><rect x="5.5" y="83.2" width="21.0" height="1.1" opacity="0.30"/><rect x="5.5" y="85.3" width="28.8" height="1.1" opacity="0.20"/><rect x="5.5" y="87.4" width="25.0" height="1.1" opacity="0.22"/><rect x="13.4" y="91.4" width="16.3" height="1.1" opacity="0.31"/><rect x="14.2" y="93.5" width="14.5" height="1.1" opacity="0.23"/><rect x="5.5" y="97.5" width="23.5" height="1.1" opacity="0.29"/><rect x="5.5" y="99.6" width="28.2" height="1.1" opacity="0.28"/><rect x="5.5" y="101.7" width="25.8" height="1.1" opacity="0.25"/><rect x="5.5" y="103.8" width="26.4" height="1.1" opacity="0.21"/><rect x="5.5" y="107.8" width="20.5" height="1.1" opacity="0.25"/><rect x="5.5" y="109.9" width="8.8" height="1.1" opacity="0.37"/><rect x="42.0" y="6.8" width="27.9" height="1.1" opacity="0.42"/><rect x="42.0" y="8.9" width="24.4" height="1.1" opacity="0.31"/><rect x="42.0" y="11.0" width="17.9" height="1.1" opacity="0.30"/><rect x="47.4" y="15.0" width="21.2" height="1.1" opacity="0.29"/><rect x="53.3" y="17.1" width="9.4" height="1.1" opacity="0.41"/><rect x="48.2" y="21.1" width="19.7" height="1.1" opacity="0.24"/><rect x="51.5" y="23.2" width="13.1" height="1.1" opacity="0.21"/><rect x="53.9" y="25.3" width="8.2" height="1.1" opacity="0.43"/><rect x="50.0" y="27.4" width="16.0" height="1.1" opacity="0.41"/><rect x="48.0" y="29.5" width="19.9" height="1.1" opacity="0.19"/><rect x="42.0" y="33.5" width="13.0" height="1.1" opacity="0.23"/><rect x="46.7" y="37.5" width="22.6" height="1.1" opacity="0.25"/><rect x="49.2" y="39.6" width="17.6" height="1.1" opacity="0.22"/><rect x="50.7" y="41.7" width="14.7" height="1.1" opacity="0.18"/><rect x="51.6" y="43.8" width="12.8" height="1.1" opacity="0.18"/><rect x="42.0" y="47.8" width="25.8" height="1.1" opacity="0.24"/><rect x="42.0" y="49.9" width="24.9" height="1.1" opacity="0.34"/><rect x="42.0" y="52.0" width="20.5" height="1.1" opacity="0.34"/><rect x="42.0" y="56.0" width="23.1" height="1.1" opacity="0.23"/><rect x="42.0" y="58.1" width="22.1" height="1.1" opacity="0.23"/><rect x="42.0" y="60.2" width="24.9" height="1.1" opacity="0.36"/><rect x="42.0" y="64.2" width="29.9" height="1.1" opacity="0.18"/><rect x="42.0" y="66.3" width="20.0" height="1.1" opacity="0.40"/><rect x="45.9" y="70.3" width="24.2" height="1.1" opacity="0.40"/><rect x="42.0" y="74.3" width="28.1" height="1.1" opacity="0.19"/><rect x="42.0" y="76.4" width="11.6" height="1.1" opacity="0.25"/><rect x="42.0" y="83.6" width="26.2" height="1.1" opacity="0.24"/><rect x="42.0" y="85.7" width="26.5" height="1.1" opacity="0.26"/><rect x="53.2" y="89.7" width="9.6" height="1.1" opacity="0.25"/><rect x="42.0" y="93.7" width="19.3" height="1.1" opacity="0.25"/><rect x="42.0" y="95.8" width="9.7" height="1.1" opacity="0.28"/><rect x="44.8" y="106.2" width="26.4" height="1.1" opacity="0.39"/><rect x="52.5" y="108.3" width="11.0" height="1.1" opacity="0.40"/></svg>
<div class="abs" style="left:205.700px;top:782.0px;width:1.600px;height:132px;background:#5c5c5c"></div>
<svg class="abs" style="left:125px;top:790px;background:#fff" width="80.800" height="116" viewBox="0 0 80.800 116" fill="#444"><rect x="8.0" y="8.4" width="26.9" height="1.1" opacity="0.22"/><rect x="10.5" y="10.5" width="21.9" height="1.1" opacity="0.34"/><rect x="17.1" y="12.6" width="8.8" height="1.1" opacity="0.39"/><rect x="8.9" y="14.7" width="25.1" height="1.1" opacity="0.34"/><rect x="10.5" y="16.8" width="22.1" height="1.1" opacity="0.38"/><rect x="5.5" y="20.8" width="26.5" height="1.1" opacity="0.38"/><rect x="5.5" y="22.9" width="19.4" height="1.1" opacity="0.35"/><rect x="5.5" y="25.0" width="23.3" height="1.1" opacity="0.36"/><rect x="17.2" y="29.0" width="8.6" height="1.1" opacity="0.21"/><rect x="14.0" y="31.1" width="14.9" height="1.1" opacity="0.21"/><rect x="9.5" y="33.2" width="24.0" height="1.1" opacity="0.32"/><rect x="11.5" y="35.3" width="20.1" height="1.1" opacity="0.34"/><rect x="13.1" y="39.3" width="16.8" height="1.1" opacity="0.20"/><rect x="8.5" y="41.4" width="25.9" height="1.1" opacity="0.40"/><rect x="16.6" y="43.5" width="9.8" height="1.1" opacity="0.31"/><rect x="16.8" y="47.5" width="9.4" height="1.1" opacity="0.25"/><rect x="10.5" y="49.6" width="22.0" height="1.1" opacity="0.23"/><rect x="10.4" y="51.7" width="22.2" height="1.1" opacity="0.42"/><rect x="8.8" y="55.7" width="25.5" height="1.1" opacity="0.25"/><rect x="17.1" y="57.8" width="8.9" height="1.1" opacity="0.34"/><rect x="15.6" y="59.9" width="11.8" height="1.1" opacity="0.33"/><rect x="5.5" y="63.9" width="23.1" height="1.1" opacity="0.32"/><rect x="5.5" y="66.0" width="19.4" height="1.1" opacity="0.20"/><rect x="5.5" y="68.1" width="22.6" height="1.1" opacity="0.35"/><rect x="5.5" y="70.2" width="21.3" height="1.1" opacity="0.35"/><rect x="13.0" y="74.2" width="16.9" height="1.1" opacity="0.37"/><rect x="8.0" y="76.3" width="27.1" height="1.1" opacity="0.32"/><rect x="14.5" y="78.4" width="14.0" height="1.1" opacity="0.20"/><rect x="5.5" y="82.4" width="29.7" height="1.1" opacity="0.42"/><rect x="5.5" y="84.5" width="16.6" height="1.1" opacity="0.25"/><rect x="16.6" y="88.5" width="9.7" height="1.1" opacity="0.37"/><rect x="15.0" y="90.6" width="13.0" height="1.1" opacity="0.27"/><rect x="5.5" y="94.6" width="30.6" height="1.1" opacity="0.36"/><rect x="5.5" y="96.7" width="22.2" height="1.1" opacity="0.40"/><rect x="5.5" y="98.8" width="25.4" height="1.1" opacity="0.19"/><rect x="5.5" y="100.9" width="8.1" height="1.1" opacity="0.30"/><rect x="5.5" y="104.9" width="24.5" height="1.1" opacity="0.27"/><rect x="5.5" y="107.0" width="10.3" height="1.1" opacity="0.26"/><rect x="45.1" y="7.0" width="25.8" height="1.1" opacity="0.36"/><rect x="45.3" y="9.1" width="25.3" height="1.1" opacity="0.25"/><rect x="50.4" y="11.2" width="15.1" height="1.1" opacity="0.28"/><rect x="45.1" y="15.2" width="25.8" height="1.1" opacity="0.37"/><rect x="45.8" y="17.3" width="24.4" height="1.1" opacity="0.25"/><rect x="53.5" y="19.4" width="9.0" height="1.1" opacity="0.35"/><rect x="51.4" y="23.4" width="13.1" height="1.1" opacity="0.31"/><rect x="52.2" y="25.5" width="11.6" height="1.1" opacity="0.27"/><rect x="42.0" y="29.5" width="20.1" height="1.1" opacity="0.41"/><rect x="53.2" y="33.5" width="9.5" height="1.1" opacity="0.41"/><rect x="50.1" y="35.6" width="15.9" height="1.1" opacity="0.33"/><rect x="52.7" y="37.7" width="10.7" height="1.1" opacity="0.40"/><rect x="49.5" y="41.7" width="17.1" height="1.1" opacity="0.27"/><rect x="51.1" y="43.8" width="13.7" height="1.1" opacity="0.36"/><rect x="44.6" y="45.9" width="26.7" height="1.1" opacity="0.25"/><rect x="42.0" y="49.9" width="27.8" height="1.1" opacity="0.21"/><rect x="42.0" y="52.0" width="20.3" height="1.1" opacity="0.20"/><rect x="42.0" y="56.0" width="22.0" height="1.1" opacity="0.41"/><rect x="42.0" y="58.1" width="32.0" height="1.1" opacity="0.29"/><rect x="42.0" y="60.2" width="21.0" height="1.1" opacity="0.23"/><rect x="42.0" y="62.3" width="20.4" height="1.1" opacity="0.27"/><rect x="42.0" y="64.4" width="9.7" height="1.1" opacity="0.24"/><rect x="53.8" y="68.4" width="8.4" height="1.1" opacity="0.40"/><rect x="50.3" y="70.5" width="15.4" height="1.1" opacity="0.37"/><rect x="52.0" y="72.6" width="12.0" height="1.1" opacity="0.25"/><rect x="44.7" y="76.6" width="26.6" height="1.1" opacity="0.21"/><rect x="49.2" y="78.7" width="17.7" height="1.1" opacity="0.34"/><rect x="45.7" y="80.8" width="24.6" height="1.1" opacity="0.23"/><rect x="42.0" y="84.8" width="27.5" height="1.1" opacity="0.29"/><rect x="42.0" y="86.9" width="14.0" height="1.1" opacity="0.38"/><rect x="47.2" y="90.9" width="21.6" height="1.1" opacity="0.40"/><rect x="49.5" y="93.0" width="17.1" height="1.1" opacity="0.33"/><rect x="42.0" y="100.2" width="25.2" height="1.1" opacity="0.29"/><rect x="42.0" y="102.3" width="29.2" height="1.1" opacity="0.24"/><rect x="42.0" y="104.4" width="21.1" height="1.1" opacity="0.42"/><rect x="42.0" y="106.5" width="20.6" height="1.1" opacity="0.39"/><rect x="42.0" y="108.6" width="21.5" height="1.1" opacity="0.39"/></svg>
<svg class="abs" style="left:207.5px;top:790px;background:#fff" width="80.800" height="116" viewBox="0 0 80.800 116" fill="#444"><rect x="10.0" y="8.7" width="23.0" height="1.1" opacity="0.24"/><rect x="8.7" y="10.8" width="25.7" height="1.1" opacity="0.34"/><rect x="14.6" y="12.9" width="13.8" height="1.1" opacity="0.21"/><rect x="15.1" y="15.0" width="12.8" height="1.1" opacity="0.34"/><rect x="10.8" y="17.1" width="21.4" height="1.1" opacity="0.21"/><rect x="15.0" y="24.3" width="13.0" height="1.1" opacity="0.38"/><rect x="17.5" y="26.4" width="8.0" height="1.1" opacity="0.31"/><rect x="7.9" y="28.5" width="27.1" height="1.1" opacity="0.25"/><rect x="5.5" y="32.5" width="25.3" height="1.1" opacity="0.24"/><rect x="5.5" y="34.6" width="22.4" height="1.1" opacity="0.42"/><rect x="5.5" y="36.7" width="28.2" height="1.1" opacity="0.26"/><rect x="5.5" y="38.8" width="19.5" height="1.1" opacity="0.30"/><rect x="5.5" y="40.9" width="20.9" height="1.1" opacity="0.29"/><rect x="5.5" y="44.9" width="23.9" height="1.1" opacity="0.30"/><rect x="5.5" y="47.0" width="28.1" height="1.1" opacity="0.36"/><rect x="5.5" y="49.1" width="23.8" height="1.1" opacity="0.28"/><rect x="5.5" y="51.2" width="8.1" height="1.1" opacity="0.25"/><rect x="8.2" y="55.2" width="26.6" height="1.1" opacity="0.26"/><rect x="5.5" y="59.2" width="22.6" height="1.1" opacity="0.40"/><rect x="5.5" y="61.3" width="10.1" height="1.1" opacity="0.34"/><rect x="5.5" y="65.3" width="30.9" height="1.1" opacity="0.19"/><rect x="5.5" y="67.4" width="19.4" height="1.1" opacity="0.41"/><rect x="16.9" y="77.8" width="9.2" height="1.1" opacity="0.28"/><rect x="8.9" y="79.9" width="25.2" height="1.1" opacity="0.40"/><rect x="10.5" y="82.0" width="22.1" height="1.1" opacity="0.43"/><rect x="11.2" y="86.0" width="20.5" height="1.1" opacity="0.31"/><rect x="13.0" y="88.1" width="17.0" height="1.1" opacity="0.26"/><rect x="5.5" y="92.1" width="23.4" height="1.1" opacity="0.22"/><rect x="5.5" y="94.2" width="19.2" height="1.1" opacity="0.25"/><rect x="5.5" y="96.3" width="23.7" height="1.1" opacity="0.42"/><rect x="5.5" y="98.4" width="20.8" height="1.1" opacity="0.42"/><rect x="5.5" y="100.5" width="12.0" height="1.1" opacity="0.27"/><rect x="5.5" y="104.5" width="20.3" height="1.1" opacity="0.36"/><rect x="5.5" y="106.6" width="21.7" height="1.1" opacity="0.32"/><rect x="5.5" y="108.7" width="24.9" height="1.1" opacity="0.26"/><rect x="42.0" y="8.2" width="29.6" height="1.1" opacity="0.37"/><rect x="42.0" y="10.3" width="19.7" height="1.1" opacity="0.19"/><rect x="42.0" y="12.4" width="20.0" height="1.1" opacity="0.41"/><rect x="42.0" y="14.5" width="12.9" height="1.1" opacity="0.37"/><rect x="42.0" y="18.5" width="23.5" height="1.1" opacity="0.42"/><rect x="42.0" y="20.6" width="8.8" height="1.1" opacity="0.37"/><rect x="47.1" y="24.6" width="21.9" height="1.1" opacity="0.33"/><rect x="46.3" y="26.7" width="23.5" height="1.1" opacity="0.42"/><rect x="42.0" y="33.9" width="26.4" height="1.1" opacity="0.42"/><rect x="42.0" y="37.9" width="29.6" height="1.1" opacity="0.21"/><rect x="42.0" y="40.0" width="17.5" height="1.1" opacity="0.18"/><rect x="42.0" y="44.0" width="29.1" height="1.1" opacity="0.33"/><rect x="42.0" y="46.1" width="14.3" height="1.1" opacity="0.26"/><rect x="42.0" y="50.1" width="25.8" height="1.1" opacity="0.28"/><rect x="42.0" y="52.2" width="21.2" height="1.1" opacity="0.28"/><rect x="42.0" y="54.3" width="27.5" height="1.1" opacity="0.30"/><rect x="42.0" y="56.4" width="26.2" height="1.1" opacity="0.22"/><rect x="42.0" y="58.5" width="16.2" height="1.1" opacity="0.21"/><rect x="49.2" y="65.7" width="17.6" height="1.1" opacity="0.36"/><rect x="49.7" y="67.8" width="16.6" height="1.1" opacity="0.24"/><rect x="42.0" y="71.8" width="22.2" height="1.1" opacity="0.31"/><rect x="42.0" y="73.9" width="29.1" height="1.1" opacity="0.37"/><rect x="42.0" y="76.0" width="23.0" height="1.1" opacity="0.25"/><rect x="42.0" y="80.0" width="28.6" height="1.1" opacity="0.23"/><rect x="42.0" y="82.1" width="12.8" height="1.1" opacity="0.24"/><rect x="53.4" y="86.1" width="9.2" height="1.1" opacity="0.24"/><rect x="51.6" y="88.2" width="12.7" height="1.1" opacity="0.31"/><rect x="47.8" y="90.3" width="20.5" height="1.1" opacity="0.21"/><rect x="49.4" y="94.3" width="17.1" height="1.1" opacity="0.38"/><rect x="51.2" y="98.3" width="13.6" height="1.1" opacity="0.21"/><rect x="52.2" y="100.4" width="11.6" height="1.1" opacity="0.42"/><rect x="42.0" y="104.4" width="24.6" height="1.1" opacity="0.29"/><rect x="42.0" y="108.4" width="19.3" height="1.1" opacity="0.34"/></svg>
<div class="abs" style="left:205.700px;top:961.3px;width:1.600px;height:132px;background:#5c5c5c"></div>
<svg class="abs" style="left:125px;top:969.3px;background:#fff" width="80.800" height="116" viewBox="0 0 80.800 116" fill="#444"><rect x="5.5" y="8.1" width="10.7" height="1.1" opacity="0.23"/><rect x="5.5" y="12.1" width="30.9" height="1.1" opacity="0.38"/><rect x="5.5" y="14.2" width="29.7" height="1.1" opacity="0.28"/><rect x="5.5" y="16.3" width="15.1" height="1.1" opacity="0.34"/><rect x="16.5" y="26.7" width="9.9" height="1.1" opacity="0.28"/><rect x="12.2" y="28.8" width="18.6" height="1.1" opacity="0.34"/><rect x="16.6" y="30.9" width="9.8" height="1.1" opacity="0.22"/><rect x="5.5" y="34.9" width="27.7" height="1.1" opacity="0.28"/><rect x="5.5" y="37.0" width="19.9" height="1.1" opacity="0.37"/><rect x="5.5" y="39.1" width="25.0" height="1.1" opacity="0.28"/><rect x="5.5" y="46.3" width="21.7" height="1.1" opacity="0.36"/><rect x="5.5" y="48.4" width="21.8" height="1.1" opacity="0.18"/><rect x="5.5" y="50.5" width="30.7" height="1.1" opacity="0.29"/><rect x="5.5" y="52.6" width="29.7" height="1.1" opacity="0.28"/><rect x="5.5" y="54.7" width="25.0" height="1.1" opacity="0.30"/><rect x="16.1" y="58.7" width="10.7" height="1.1" opacity="0.38"/><rect x="5.5" y="62.7" width="23.9" height="1.1" opacity="0.31"/><rect x="5.5" y="64.8" width="21.1" height="1.1" opacity="0.25"/><rect x="5.5" y="66.9" width="18.0" height="1.1" opacity="0.41"/><rect x="5.5" y="70.9" width="29.3" height="1.1" opacity="0.38"/><rect x="5.5" y="73.0" width="23.1" height="1.1" opacity="0.39"/><rect x="5.5" y="75.1" width="8.8" height="1.1" opacity="0.41"/><rect x="5.5" y="79.1" width="24.2" height="1.1" opacity="0.41"/><rect x="5.5" y="81.2" width="27.1" height="1.1" opacity="0.39"/><rect x="5.5" y="83.3" width="11.1" height="1.1" opacity="0.38"/><rect x="5.5" y="87.3" width="21.7" height="1.1" opacity="0.30"/><rect x="5.5" y="89.4" width="26.4" height="1.1" opacity="0.19"/><rect x="5.5" y="91.5" width="26.0" height="1.1" opacity="0.22"/><rect x="10.5" y="95.5" width="21.9" height="1.1" opacity="0.40"/><rect x="17.1" y="97.6" width="8.8" height="1.1" opacity="0.32"/><rect x="5.5" y="101.6" width="14.2" height="1.1" opacity="0.28"/><rect x="5.5" y="105.6" width="23.1" height="1.1" opacity="0.29"/><rect x="5.5" y="107.7" width="26.7" height="1.1" opacity="0.29"/><rect x="5.5" y="109.8" width="27.6" height="1.1" opacity="0.29"/><rect x="42.0" y="10.5" width="24.9" height="1.1" opacity="0.33"/><rect x="42.0" y="12.6" width="29.7" height="1.1" opacity="0.39"/><rect x="42.0" y="14.7" width="23.6" height="1.1" opacity="0.28"/><rect x="49.8" y="21.9" width="16.5" height="1.1" opacity="0.31"/><rect x="53.6" y="24.0" width="8.8" height="1.1" opacity="0.34"/><rect x="47.1" y="28.0" width="21.8" height="1.1" opacity="0.20"/><rect x="46.8" y="30.1" width="22.4" height="1.1" opacity="0.40"/><rect x="47.7" y="32.2" width="20.5" height="1.1" opacity="0.38"/><rect x="53.8" y="34.3" width="8.5" height="1.1" opacity="0.20"/><rect x="42.0" y="38.3" width="21.7" height="1.1" opacity="0.43"/><rect x="42.0" y="40.4" width="25.5" height="1.1" opacity="0.42"/><rect x="42.0" y="42.5" width="30.9" height="1.1" opacity="0.22"/><rect x="42.0" y="44.6" width="23.1" height="1.1" opacity="0.41"/><rect x="50.9" y="51.8" width="14.2" height="1.1" opacity="0.33"/><rect x="45.3" y="53.9" width="25.4" height="1.1" opacity="0.29"/><rect x="51.6" y="56.0" width="12.9" height="1.1" opacity="0.42"/><rect x="49.4" y="58.1" width="17.2" height="1.1" opacity="0.33"/><rect x="48.1" y="60.2" width="19.8" height="1.1" opacity="0.24"/><rect x="52.5" y="64.2" width="11.1" height="1.1" opacity="0.41"/><rect x="47.5" y="66.3" width="21.0" height="1.1" opacity="0.40"/><rect x="46.6" y="70.3" width="22.8" height="1.1" opacity="0.19"/><rect x="45.8" y="72.4" width="24.5" height="1.1" opacity="0.42"/><rect x="49.7" y="74.5" width="16.7" height="1.1" opacity="0.31"/><rect x="47.4" y="76.6" width="21.2" height="1.1" opacity="0.40"/><rect x="51.6" y="78.7" width="12.8" height="1.1" opacity="0.31"/><rect x="42.0" y="82.7" width="22.6" height="1.1" opacity="0.43"/><rect x="42.0" y="84.8" width="26.6" height="1.1" opacity="0.27"/><rect x="42.0" y="86.9" width="29.0" height="1.1" opacity="0.29"/><rect x="42.0" y="89.0" width="11.4" height="1.1" opacity="0.37"/><rect x="44.7" y="96.2" width="26.5" height="1.1" opacity="0.40"/><rect x="45.1" y="98.3" width="25.8" height="1.1" opacity="0.40"/><rect x="52.6" y="102.3" width="10.9" height="1.1" opacity="0.33"/><rect x="49.9" y="104.4" width="16.3" height="1.1" opacity="0.31"/><rect x="45.4" y="106.5" width="25.2" height="1.1" opacity="0.21"/><rect x="51.8" y="108.6" width="12.4" height="1.1" opacity="0.34"/></svg>
<svg class="abs" style="left:207.5px;top:969.3px;background:#fff" width="80.800" height="116" viewBox="0 0 80.800 116" fill="#444"><rect x="5.5" y="9.3" width="18.3" height="1.1" opacity="0.28"/><rect x="11.5" y="13.3" width="20.0" height="1.1" opacity="0.30"/><rect x="16.2" y="15.4" width="10.6" height="1.1" opacity="0.41"/><rect x="5.5" y="19.4" width="20.0" height="1.1" opacity="0.22"/><rect x="5.5" y="21.5" width="20.8" height="1.1" opacity="0.25"/><rect x="9.6" y="25.5" width="23.8" height="1.1" opacity="0.40"/><rect x="5.5" y="29.5" width="31.2" height="1.1" opacity="0.36"/><rect x="5.5" y="31.6" width="22.4" height="1.1" opacity="0.41"/><rect x="5.5" y="33.7" width="8.8" height="1.1" opacity="0.31"/><rect x="8.7" y="37.7" width="25.5" height="1.1" opacity="0.21"/><rect x="11.6" y="39.8" width="19.8" height="1.1" opacity="0.34"/><rect x="11.7" y="43.8" width="19.7" height="1.1" opacity="0.31"/><rect x="11.3" y="45.9" width="20.3" height="1.1" opacity="0.38"/><rect x="15.8" y="48.0" width="11.4" height="1.1" opacity="0.26"/><rect x="5.5" y="52.0" width="21.9" height="1.1" opacity="0.30"/><rect x="5.5" y="56.0" width="28.7" height="1.1" opacity="0.30"/><rect x="5.5" y="58.1" width="28.7" height="1.1" opacity="0.29"/><rect x="5.5" y="60.2" width="12.3" height="1.1" opacity="0.21"/><rect x="8.9" y="64.2" width="25.1" height="1.1" opacity="0.41"/><rect x="5.5" y="68.2" width="22.6" height="1.1" opacity="0.32"/><rect x="5.5" y="70.3" width="16.4" height="1.1" opacity="0.38"/><rect x="8.6" y="74.3" width="25.8" height="1.1" opacity="0.40"/><rect x="16.7" y="76.4" width="9.6" height="1.1" opacity="0.31"/><rect x="5.5" y="80.4" width="21.8" height="1.1" opacity="0.22"/><rect x="5.5" y="82.5" width="25.6" height="1.1" opacity="0.23"/><rect x="8.8" y="86.5" width="25.4" height="1.1" opacity="0.34"/><rect x="10.8" y="88.6" width="21.3" height="1.1" opacity="0.35"/><rect x="8.1" y="90.7" width="26.8" height="1.1" opacity="0.30"/><rect x="17.2" y="94.7" width="8.5" height="1.1" opacity="0.42"/><rect x="15.3" y="96.8" width="12.5" height="1.1" opacity="0.40"/><rect x="9.9" y="98.9" width="23.2" height="1.1" opacity="0.28"/><rect x="11.9" y="101.0" width="19.2" height="1.1" opacity="0.32"/><rect x="16.5" y="105.0" width="10.0" height="1.1" opacity="0.41"/><rect x="5.5" y="109.0" width="19.6" height="1.1" opacity="0.21"/><rect x="42.0" y="17.5" width="29.7" height="1.1" opacity="0.38"/><rect x="42.0" y="19.6" width="30.6" height="1.1" opacity="0.20"/><rect x="42.0" y="21.7" width="30.3" height="1.1" opacity="0.41"/><rect x="42.0" y="23.8" width="31.3" height="1.1" opacity="0.21"/><rect x="42.0" y="25.9" width="11.9" height="1.1" opacity="0.21"/><rect x="42.0" y="33.1" width="20.3" height="1.1" opacity="0.37"/><rect x="42.0" y="35.2" width="27.3" height="1.1" opacity="0.30"/><rect x="42.0" y="37.3" width="20.9" height="1.1" opacity="0.38"/><rect x="42.0" y="39.4" width="27.5" height="1.1" opacity="0.25"/><rect x="42.0" y="41.5" width="14.5" height="1.1" opacity="0.25"/><rect x="46.7" y="45.5" width="22.6" height="1.1" opacity="0.41"/><rect x="46.6" y="47.6" width="22.8" height="1.1" opacity="0.33"/><rect x="42.0" y="51.6" width="19.6" height="1.1" opacity="0.28"/><rect x="42.0" y="53.7" width="16.4" height="1.1" opacity="0.37"/><rect x="48.6" y="57.7" width="18.9" height="1.1" opacity="0.36"/><rect x="46.1" y="59.8" width="23.9" height="1.1" opacity="0.32"/><rect x="51.2" y="61.9" width="13.5" height="1.1" opacity="0.29"/><rect x="49.0" y="64.0" width="18.1" height="1.1" opacity="0.25"/><rect x="49.3" y="68.0" width="17.4" height="1.1" opacity="0.30"/><rect x="42.0" y="72.0" width="26.8" height="1.1" opacity="0.42"/><rect x="42.0" y="74.1" width="17.9" height="1.1" opacity="0.32"/><rect x="47.3" y="78.1" width="21.4" height="1.1" opacity="0.30"/><rect x="52.9" y="80.2" width="10.1" height="1.1" opacity="0.34"/><rect x="53.2" y="82.3" width="9.6" height="1.1" opacity="0.38"/><rect x="47.3" y="84.4" width="21.4" height="1.1" opacity="0.38"/><rect x="48.0" y="86.5" width="20.1" height="1.1" opacity="0.27"/><rect x="42.0" y="90.5" width="28.7" height="1.1" opacity="0.29"/><rect x="42.0" y="92.6" width="27.5" height="1.1" opacity="0.27"/><rect x="42.0" y="94.7" width="13.8" height="1.1" opacity="0.29"/><rect x="42.0" y="98.7" width="30.5" height="1.1" opacity="0.24"/><rect x="42.0" y="100.8" width="16.8" height="1.1" opacity="0.31"/><rect x="42.0" y="104.8" width="19.6" height="1.1" opacity="0.33"/><rect x="42.0" y="106.9" width="25.9" height="1.1" opacity="0.40"/><rect x="42.0" y="109.0" width="25.0" height="1.1" opacity="0.32"/></svg>
<div class="abs" style="left:205.700px;top:1139.3px;width:1.600px;height:132px;background:#5c5c5c"></div>
<svg class="abs" style="left:125px;top:1147.3px;background:#fff" width="80.800" height="116" viewBox="0 0 80.800 116" fill="#444"><rect x="5.5" y="7.0" width="26.6" height="1.1" opacity="0.21"/><rect x="5.5" y="9.1" width="25.1" height="1.1" opacity="0.40"/><rect x="5.5" y="11.2" width="22.2" height="1.1" opacity="0.23"/><rect x="5.5" y="13.3" width="13.8" height="1.1" opacity="0.36"/><rect x="5.5" y="17.3" width="31.7" height="1.1" opacity="0.36"/><rect x="5.5" y="19.4" width="19.6" height="1.1" opacity="0.27"/><rect x="8.3" y="23.4" width="26.3" height="1.1" opacity="0.43"/><rect x="15.9" y="25.5" width="11.2" height="1.1" opacity="0.34"/><rect x="5.5" y="29.5" width="29.4" height="1.1" opacity="0.36"/><rect x="5.5" y="31.6" width="16.4" height="1.1" opacity="0.23"/><rect x="9.0" y="35.6" width="25.0" height="1.1" opacity="0.30"/><rect x="5.5" y="42.8" width="25.6" height="1.1" opacity="0.34"/><rect x="5.5" y="44.9" width="25.1" height="1.1" opacity="0.22"/><rect x="5.5" y="47.0" width="19.6" height="1.1" opacity="0.28"/><rect x="5.5" y="51.0" width="26.5" height="1.1" opacity="0.37"/><rect x="5.5" y="53.1" width="24.6" height="1.1" opacity="0.24"/><rect x="5.5" y="55.2" width="28.4" height="1.1" opacity="0.40"/><rect x="5.5" y="57.3" width="29.1" height="1.1" opacity="0.36"/><rect x="5.5" y="59.4" width="24.4" height="1.1" opacity="0.35"/><rect x="5.5" y="63.4" width="22.5" height="1.1" opacity="0.36"/><rect x="5.5" y="65.5" width="30.7" height="1.1" opacity="0.24"/><rect x="5.5" y="67.6" width="15.7" height="1.1" opacity="0.36"/><rect x="5.5" y="71.6" width="25.0" height="1.1" opacity="0.34"/><rect x="5.5" y="73.7" width="24.4" height="1.1" opacity="0.35"/><rect x="5.5" y="75.8" width="31.1" height="1.1" opacity="0.23"/><rect x="5.5" y="77.9" width="27.6" height="1.1" opacity="0.37"/><rect x="5.5" y="80.0" width="15.5" height="1.1" opacity="0.30"/><rect x="15.4" y="84.0" width="12.2" height="1.1" opacity="0.36"/><rect x="5.5" y="88.0" width="20.5" height="1.1" opacity="0.32"/><rect x="5.5" y="90.1" width="18.4" height="1.1" opacity="0.36"/><rect x="5.5" y="94.1" width="23.9" height="1.1" opacity="0.27"/><rect x="5.5" y="96.2" width="28.7" height="1.1" opacity="0.29"/><rect x="5.5" y="98.3" width="31.9" height="1.1" opacity="0.23"/><rect x="5.5" y="100.4" width="17.9" height="1.1" opacity="0.41"/><rect x="5.5" y="104.4" width="19.9" height="1.1" opacity="0.25"/><rect x="5.5" y="106.5" width="24.3" height="1.1" opacity="0.18"/><rect x="5.5" y="108.6" width="16.0" height="1.1" opacity="0.29"/><rect x="51.1" y="8.1" width="13.8" height="1.1" opacity="0.28"/><rect x="44.8" y="10.2" width="26.3" height="1.1" opacity="0.42"/><rect x="42.0" y="14.2" width="21.3" height="1.1" opacity="0.41"/><rect x="42.0" y="16.3" width="20.1" height="1.1" opacity="0.38"/><rect x="42.0" y="18.4" width="11.7" height="1.1" opacity="0.34"/><rect x="42.0" y="22.4" width="23.7" height="1.1" opacity="0.34"/><rect x="42.0" y="24.5" width="29.7" height="1.1" opacity="0.38"/><rect x="42.0" y="26.6" width="25.2" height="1.1" opacity="0.25"/><rect x="42.0" y="28.7" width="26.2" height="1.1" opacity="0.21"/><rect x="42.0" y="30.8" width="24.0" height="1.1" opacity="0.27"/><rect x="42.0" y="34.8" width="28.0" height="1.1" opacity="0.43"/><rect x="42.0" y="36.9" width="21.0" height="1.1" opacity="0.30"/><rect x="51.6" y="40.9" width="12.7" height="1.1" opacity="0.26"/><rect x="49.4" y="43.0" width="17.2" height="1.1" opacity="0.29"/><rect x="47.9" y="45.1" width="20.2" height="1.1" opacity="0.34"/><rect x="50.5" y="47.2" width="15.0" height="1.1" opacity="0.41"/><rect x="45.8" y="49.3" width="24.4" height="1.1" opacity="0.19"/><rect x="42.0" y="53.3" width="21.0" height="1.1" opacity="0.39"/><rect x="42.0" y="55.4" width="20.2" height="1.1" opacity="0.18"/><rect x="48.2" y="62.6" width="19.7" height="1.1" opacity="0.32"/><rect x="45.8" y="64.7" width="24.4" height="1.1" opacity="0.23"/><rect x="49.7" y="66.8" width="16.7" height="1.1" opacity="0.38"/><rect x="52.0" y="68.9" width="12.0" height="1.1" opacity="0.28"/><rect x="42.0" y="72.9" width="27.0" height="1.1" opacity="0.38"/><rect x="42.0" y="75.0" width="27.8" height="1.1" opacity="0.40"/><rect x="42.0" y="77.1" width="23.1" height="1.1" opacity="0.39"/><rect x="53.2" y="81.1" width="9.5" height="1.1" opacity="0.39"/><rect x="47.6" y="83.2" width="20.9" height="1.1" opacity="0.21"/><rect x="52.9" y="85.3" width="10.3" height="1.1" opacity="0.28"/><rect x="46.1" y="87.4" width="23.9" height="1.1" opacity="0.30"/><rect x="42.0" y="91.4" width="21.0" height="1.1" opacity="0.30"/><rect x="42.0" y="93.5" width="25.6" height="1.1" opacity="0.31"/><rect x="42.0" y="95.6" width="24.6" height="1.1" opacity="0.18"/><rect x="42.0" y="99.6" width="25.6" height="1.1" opacity="0.25"/><rect x="42.0" y="101.7" width="25.2" height="1.1" opacity="0.29"/><rect x="42.0" y="103.8" width="27.2" height="1.1" opacity="0.35"/><rect x="42.0" y="107.8" width="19.6" height="1.1" opacity="0.33"/><rect x="42.0" y="109.9" width="21.1" height="1.1" opacity="0.41"/></svg>
<svg class="abs" style="left:207.5px;top:1147.3px;background:#fff" width="80.800" height="116" viewBox="0 0 80.800 116" fill="#444"><rect x="5.5" y="7.0" width="28.9" height="1.1" opacity="0.22"/><rect x="5.5" y="9.1" width="21.9" height="1.1" opacity="0.28"/><rect x="5.5" y="11.2" width="10.4" height="1.1" opacity="0.20"/><rect x="5.5" y="15.2" width="25.9" height="1.1" opacity="0.37"/><rect x="5.5" y="17.3" width="12.0" height="1.1" opacity="0.29"/><rect x="14.7" y="21.3" width="13.6" height="1.1" opacity="0.27"/><rect x="12.8" y="23.4" width="17.5" height="1.1" opacity="0.26"/><rect x="8.1" y="25.5" width="26.9" height="1.1" opacity="0.40"/><rect x="5.5" y="29.5" width="29.3" height="1.1" opacity="0.26"/><rect x="5.5" y="31.6" width="14.1" height="1.1" opacity="0.25"/><rect x="7.9" y="35.6" width="27.1" height="1.1" opacity="0.28"/><rect x="12.2" y="37.7" width="18.6" height="1.1" opacity="0.28"/><rect x="12.0" y="39.8" width="19.0" height="1.1" opacity="0.28"/><rect x="16.5" y="41.9" width="10.1" height="1.1" opacity="0.19"/><rect x="5.5" y="45.9" width="27.6" height="1.1" opacity="0.38"/><rect x="5.5" y="48.0" width="30.8" height="1.1" opacity="0.33"/><rect x="5.5" y="50.1" width="19.8" height="1.1" opacity="0.34"/><rect x="5.5" y="54.1" width="20.3" height="1.1" opacity="0.19"/><rect x="5.5" y="56.2" width="27.3" height="1.1" opacity="0.34"/><rect x="5.5" y="58.3" width="11.3" height="1.1" opacity="0.35"/><rect x="5.5" y="62.3" width="30.9" height="1.1" opacity="0.34"/><rect x="5.5" y="64.4" width="23.9" height="1.1" opacity="0.39"/><rect x="5.5" y="66.5" width="23.1" height="1.1" opacity="0.32"/><rect x="17.2" y="70.5" width="8.7" height="1.1" opacity="0.19"/><rect x="12.1" y="72.6" width="18.9" height="1.1" opacity="0.32"/><rect x="5.5" y="76.6" width="19.7" height="1.1" opacity="0.21"/><rect x="5.5" y="78.7" width="29.6" height="1.1" opacity="0.32"/><rect x="5.5" y="80.8" width="25.6" height="1.1" opacity="0.29"/><rect x="5.5" y="88.0" width="27.6" height="1.1" opacity="0.22"/><rect x="5.5" y="90.1" width="29.1" height="1.1" opacity="0.32"/><rect x="5.5" y="92.2" width="9.6" height="1.1" opacity="0.30"/><rect x="17.5" y="96.2" width="8.1" height="1.1" opacity="0.35"/><rect x="16.3" y="98.3" width="10.3" height="1.1" opacity="0.42"/><rect x="16.7" y="100.4" width="9.7" height="1.1" opacity="0.40"/><rect x="16.3" y="102.5" width="10.5" height="1.1" opacity="0.18"/><rect x="5.5" y="106.5" width="28.7" height="1.1" opacity="0.41"/><rect x="5.5" y="108.6" width="15.0" height="1.1" opacity="0.37"/><rect x="48.0" y="8.1" width="20.1" height="1.1" opacity="0.36"/><rect x="49.6" y="10.2" width="16.8" height="1.1" opacity="0.41"/><rect x="51.6" y="12.3" width="12.9" height="1.1" opacity="0.42"/><rect x="47.1" y="14.4" width="21.8" height="1.1" opacity="0.18"/><rect x="53.9" y="16.5" width="8.3" height="1.1" opacity="0.34"/><rect x="42.0" y="20.5" width="14.0" height="1.1" opacity="0.33"/><rect x="42.0" y="24.5" width="20.0" height="1.1" opacity="0.27"/><rect x="42.0" y="26.6" width="26.6" height="1.1" opacity="0.29"/><rect x="42.0" y="28.7" width="27.9" height="1.1" opacity="0.22"/><rect x="42.0" y="30.8" width="29.4" height="1.1" opacity="0.27"/><rect x="42.0" y="32.9" width="20.4" height="1.1" opacity="0.34"/><rect x="42.0" y="36.9" width="25.0" height="1.1" opacity="0.25"/><rect x="42.0" y="39.0" width="28.9" height="1.1" opacity="0.26"/><rect x="42.0" y="41.1" width="13.4" height="1.1" opacity="0.34"/><rect x="42.0" y="45.1" width="23.5" height="1.1" opacity="0.33"/><rect x="42.0" y="47.2" width="31.7" height="1.1" opacity="0.39"/><rect x="42.0" y="49.3" width="26.9" height="1.1" opacity="0.26"/><rect x="42.0" y="51.4" width="24.7" height="1.1" opacity="0.40"/><rect x="42.0" y="53.5" width="15.2" height="1.1" opacity="0.35"/><rect x="42.0" y="57.5" width="22.8" height="1.1" opacity="0.18"/><rect x="42.0" y="59.6" width="13.1" height="1.1" opacity="0.29"/><rect x="42.0" y="63.6" width="29.2" height="1.1" opacity="0.25"/><rect x="42.0" y="65.7" width="21.0" height="1.1" opacity="0.40"/><rect x="42.0" y="67.8" width="31.9" height="1.1" opacity="0.22"/><rect x="42.0" y="69.9" width="31.7" height="1.1" opacity="0.38"/><rect x="42.0" y="72.0" width="18.5" height="1.1" opacity="0.37"/><rect x="48.7" y="76.0" width="18.6" height="1.1" opacity="0.38"/><rect x="52.1" y="78.1" width="11.8" height="1.1" opacity="0.37"/><rect x="45.1" y="80.2" width="25.9" height="1.1" opacity="0.24"/><rect x="42.0" y="84.2" width="28.3" height="1.1" opacity="0.41"/><rect x="42.0" y="86.3" width="26.7" height="1.1" opacity="0.18"/><rect x="42.0" y="88.4" width="24.1" height="1.1" opacity="0.32"/><rect x="42.0" y="90.5" width="18.3" height="1.1" opacity="0.27"/><rect x="42.0" y="97.7" width="30.5" height="1.1" opacity="0.31"/><rect x="42.0" y="99.8" width="25.3" height="1.1" opacity="0.33"/><rect x="42.0" y="101.9" width="11.6" height="1.1" opacity="0.23"/><rect x="48.5" y="105.9" width="19.1" height="1.1" opacity="0.27"/><rect x="46.5" y="108.0" width="23.0" height="1.1" opacity="0.39"/></svg>
<div class="abs" style="left:205.700px;top:1318.0px;width:1.600px;height:132px;background:#5c5c5c"></div>
<svg class="abs" style="left:125px;top:1326px;background:#fff" width="80.800" height="116" viewBox="0 0 80.800 116" fill="#444"><rect x="5.5" y="6.7" width="20.6" height="1.1" opacity="0.34"/><rect x="5.5" y="8.8" width="29.3" height="1.1" opacity="0.22"/><rect x="5.5" y="10.9" width="19.5" height="1.1" opacity="0.27"/><rect x="15.5" y="14.9" width="11.9" height="1.1" opacity="0.40"/><rect x="5.5" y="18.9" width="22.5" height="1.1" opacity="0.37"/><rect x="5.5" y="21.0" width="24.7" height="1.1" opacity="0.42"/><rect x="5.5" y="23.1" width="22.7" height="1.1" opacity="0.38"/><rect x="5.5" y="27.1" width="23.5" height="1.1" opacity="0.43"/><rect x="5.5" y="29.2" width="15.3" height="1.1" opacity="0.19"/><rect x="5.5" y="36.4" width="31.3" height="1.1" opacity="0.41"/><rect x="5.5" y="38.5" width="20.0" height="1.1" opacity="0.33"/><rect x="5.5" y="40.6" width="24.3" height="1.1" opacity="0.21"/><rect x="5.5" y="42.7" width="26.4" height="1.1" opacity="0.24"/><rect x="8.7" y="46.7" width="25.7" height="1.1" opacity="0.31"/><rect x="15.7" y="48.8" width="11.5" height="1.1" opacity="0.39"/><rect x="13.9" y="50.9" width="15.1" height="1.1" opacity="0.24"/><rect x="10.6" y="53.0" width="21.8" height="1.1" opacity="0.22"/><rect x="12.2" y="57.0" width="18.6" height="1.1" opacity="0.19"/><rect x="8.7" y="59.1" width="25.6" height="1.1" opacity="0.24"/><rect x="5.5" y="63.1" width="31.8" height="1.1" opacity="0.19"/><rect x="5.5" y="65.2" width="21.1" height="1.1" opacity="0.37"/><rect x="5.5" y="67.3" width="31.2" height="1.1" opacity="0.35"/><rect x="5.5" y="69.4" width="13.7" height="1.1" opacity="0.33"/><rect x="5.5" y="73.4" width="15.1" height="1.1" opacity="0.28"/><rect x="15.2" y="77.4" width="12.6" height="1.1" opacity="0.22"/><rect x="11.0" y="79.5" width="21.0" height="1.1" opacity="0.18"/><rect x="10.6" y="81.6" width="21.8" height="1.1" opacity="0.23"/><rect x="11.6" y="88.8" width="19.9" height="1.1" opacity="0.27"/><rect x="10.3" y="90.9" width="22.4" height="1.1" opacity="0.37"/><rect x="5.5" y="94.9" width="27.2" height="1.1" opacity="0.29"/><rect x="5.5" y="97.0" width="23.5" height="1.1" opacity="0.39"/><rect x="5.5" y="99.1" width="17.2" height="1.1" opacity="0.34"/><rect x="5.5" y="103.1" width="21.5" height="1.1" opacity="0.29"/><rect x="5.5" y="105.2" width="25.1" height="1.1" opacity="0.29"/><rect x="5.5" y="109.2" width="21.2" height="1.1" opacity="0.25"/><rect x="53.0" y="8.5" width="10.1" height="1.1" opacity="0.29"/><rect x="49.4" y="10.6" width="17.3" height="1.1" opacity="0.22"/><rect x="42.0" y="14.6" width="27.8" height="1.1" opacity="0.23"/><rect x="42.0" y="16.7" width="25.3" height="1.1" opacity="0.25"/><rect x="42.0" y="18.8" width="22.5" height="1.1" opacity="0.23"/><rect x="42.0" y="20.9" width="15.0" height="1.1" opacity="0.43"/><rect x="51.2" y="24.9" width="13.6" height="1.1" opacity="0.40"/><rect x="53.4" y="27.0" width="9.1" height="1.1" opacity="0.36"/><rect x="46.3" y="31.0" width="23.5" height="1.1" opacity="0.27"/><rect x="52.7" y="33.1" width="10.7" height="1.1" opacity="0.18"/><rect x="46.0" y="35.2" width="24.0" height="1.1" opacity="0.31"/><rect x="52.2" y="37.3" width="11.6" height="1.1" opacity="0.29"/><rect x="52.3" y="41.3" width="11.5" height="1.1" opacity="0.39"/><rect x="49.0" y="43.4" width="18.0" height="1.1" opacity="0.24"/><rect x="53.2" y="47.4" width="9.7" height="1.1" opacity="0.33"/><rect x="49.2" y="49.5" width="17.5" height="1.1" opacity="0.25"/><rect x="52.0" y="51.6" width="12.0" height="1.1" opacity="0.33"/><rect x="51.0" y="55.6" width="13.9" height="1.1" opacity="0.18"/><rect x="47.4" y="57.7" width="21.3" height="1.1" opacity="0.31"/><rect x="45.9" y="59.8" width="24.1" height="1.1" opacity="0.41"/><rect x="49.0" y="61.9" width="18.0" height="1.1" opacity="0.27"/><rect x="51.3" y="64.0" width="13.4" height="1.1" opacity="0.34"/><rect x="45.3" y="68.0" width="25.5" height="1.1" opacity="0.30"/><rect x="48.6" y="72.0" width="18.8" height="1.1" opacity="0.43"/><rect x="53.6" y="74.1" width="8.7" height="1.1" opacity="0.36"/><rect x="49.0" y="78.1" width="18.0" height="1.1" opacity="0.29"/><rect x="49.0" y="80.2" width="17.9" height="1.1" opacity="0.21"/><rect x="47.1" y="82.3" width="21.7" height="1.1" opacity="0.38"/><rect x="45.7" y="84.4" width="24.6" height="1.1" opacity="0.26"/><rect x="47.2" y="86.5" width="21.7" height="1.1" opacity="0.28"/><rect x="53.0" y="90.5" width="10.1" height="1.1" opacity="0.36"/><rect x="42.0" y="94.5" width="18.3" height="1.1" opacity="0.19"/><rect x="42.0" y="98.5" width="21.3" height="1.1" opacity="0.26"/><rect x="42.0" y="100.6" width="18.7" height="1.1" opacity="0.42"/><rect x="53.8" y="107.8" width="8.3" height="1.1" opacity="0.33"/><rect x="48.5" y="109.9" width="19.1" height="1.1" opacity="0.31"/></svg>
<svg class="abs" style="left:207.5px;top:1326px;background:#fff" width="80.800" height="116" viewBox="0 0 80.800 116" fill="#444"><rect x="15.8" y="8.1" width="11.4" height="1.1" opacity="0.25"/><rect x="13.0" y="10.2" width="16.9" height="1.1" opacity="0.33"/><rect x="10.2" y="12.3" width="22.6" height="1.1" opacity="0.21"/><rect x="16.3" y="14.4" width="10.3" height="1.1" opacity="0.40"/><rect x="12.3" y="16.5" width="18.4" height="1.1" opacity="0.24"/><rect x="5.5" y="20.5" width="28.8" height="1.1" opacity="0.22"/><rect x="5.5" y="22.6" width="29.8" height="1.1" opacity="0.41"/><rect x="5.5" y="24.7" width="24.2" height="1.1" opacity="0.29"/><rect x="5.5" y="26.8" width="24.1" height="1.1" opacity="0.31"/><rect x="5.5" y="30.8" width="14.5" height="1.1" opacity="0.24"/><rect x="5.5" y="34.8" width="26.4" height="1.1" opacity="0.43"/><rect x="5.5" y="36.9" width="23.3" height="1.1" opacity="0.28"/><rect x="5.5" y="39.0" width="18.8" height="1.1" opacity="0.26"/><rect x="5.5" y="43.0" width="22.4" height="1.1" opacity="0.29"/><rect x="5.5" y="45.1" width="27.3" height="1.1" opacity="0.27"/><rect x="5.5" y="47.2" width="26.0" height="1.1" opacity="0.20"/><rect x="5.5" y="49.3" width="16.3" height="1.1" opacity="0.31"/><rect x="5.5" y="56.5" width="31.2" height="1.1" opacity="0.34"/><rect x="5.5" y="58.6" width="29.6" height="1.1" opacity="0.40"/><rect x="5.5" y="60.7" width="25.0" height="1.1" opacity="0.19"/><rect x="5.5" y="64.7" width="27.2" height="1.1" opacity="0.34"/><rect x="5.5" y="66.8" width="23.5" height="1.1" opacity="0.19"/><rect x="5.5" y="70.8" width="16.3" height="1.1" opacity="0.42"/><rect x="15.9" y="74.8" width="11.2" height="1.1" opacity="0.20"/><rect x="8.3" y="76.9" width="26.4" height="1.1" opacity="0.41"/><rect x="5.5" y="80.9" width="18.2" height="1.1" opacity="0.22"/><rect x="5.5" y="84.9" width="30.9" height="1.1" opacity="0.32"/><rect x="5.5" y="87.0" width="13.3" height="1.1" opacity="0.36"/><rect x="5.5" y="91.0" width="27.0" height="1.1" opacity="0.32"/><rect x="5.5" y="93.1" width="20.5" height="1.1" opacity="0.23"/><rect x="5.5" y="97.1" width="23.1" height="1.1" opacity="0.30"/><rect x="5.5" y="99.2" width="29.7" height="1.1" opacity="0.19"/><rect x="5.5" y="101.3" width="14.4" height="1.1" opacity="0.23"/><rect x="5.5" y="105.3" width="31.0" height="1.1" opacity="0.22"/><rect x="5.5" y="107.4" width="31.4" height="1.1" opacity="0.26"/><rect x="5.5" y="109.5" width="14.2" height="1.1" opacity="0.25"/><rect x="42.0" y="8.6" width="11.0" height="1.1" opacity="0.20"/><rect x="42.0" y="12.6" width="25.8" height="1.1" opacity="0.39"/><rect x="42.0" y="14.7" width="23.7" height="1.1" opacity="0.37"/><rect x="42.0" y="16.8" width="18.0" height="1.1" opacity="0.43"/><rect x="42.0" y="20.8" width="27.8" height="1.1" opacity="0.22"/><rect x="42.0" y="22.9" width="11.9" height="1.1" opacity="0.33"/><rect x="42.0" y="26.9" width="28.7" height="1.1" opacity="0.37"/><rect x="42.0" y="29.0" width="28.9" height="1.1" opacity="0.30"/><rect x="42.0" y="31.1" width="29.2" height="1.1" opacity="0.36"/><rect x="42.0" y="33.2" width="30.9" height="1.1" opacity="0.21"/><rect x="42.0" y="35.3" width="24.7" height="1.1" opacity="0.18"/><rect x="50.2" y="39.3" width="15.6" height="1.1" opacity="0.43"/><rect x="52.6" y="41.4" width="10.9" height="1.1" opacity="0.39"/><rect x="51.3" y="43.5" width="13.4" height="1.1" opacity="0.34"/><rect x="42.0" y="47.5" width="25.1" height="1.1" opacity="0.36"/><rect x="42.0" y="49.6" width="22.9" height="1.1" opacity="0.28"/><rect x="42.0" y="51.7" width="26.3" height="1.1" opacity="0.28"/><rect x="42.0" y="53.8" width="23.3" height="1.1" opacity="0.38"/><rect x="42.0" y="55.9" width="24.3" height="1.1" opacity="0.30"/><rect x="42.0" y="59.9" width="29.5" height="1.1" opacity="0.29"/><rect x="42.0" y="62.0" width="15.2" height="1.1" opacity="0.24"/><rect x="45.9" y="66.0" width="24.2" height="1.1" opacity="0.39"/><rect x="44.8" y="68.1" width="26.4" height="1.1" opacity="0.23"/><rect x="51.5" y="72.1" width="12.9" height="1.1" opacity="0.40"/><rect x="42.0" y="76.1" width="26.1" height="1.1" opacity="0.43"/><rect x="42.0" y="78.2" width="25.8" height="1.1" opacity="0.31"/><rect x="42.0" y="80.3" width="21.2" height="1.1" opacity="0.28"/><rect x="42.0" y="84.3" width="25.0" height="1.1" opacity="0.18"/><rect x="42.0" y="86.4" width="20.1" height="1.1" opacity="0.24"/><rect x="42.0" y="88.5" width="15.9" height="1.1" opacity="0.31"/><rect x="52.2" y="92.5" width="11.6" height="1.1" opacity="0.29"/><rect x="50.1" y="94.6" width="15.7" height="1.1" opacity="0.37"/><rect x="45.4" y="96.7" width="25.3" height="1.1" opacity="0.33"/><rect x="42.0" y="100.7" width="21.4" height="1.1" opacity="0.26"/><rect x="42.0" y="102.8" width="31.7" height="1.1" opacity="0.39"/><rect x="42.0" y="104.9" width="25.8" height="1.1" opacity="0.21"/><rect x="42.0" y="107.0" width="25.2" height="1.1" opacity="0.35"/></svg>
<!-- ===== canvas ===== -->
<div class="abs" style="left:382px;top:147px;width:1845px;height:33px;background:#383838"></div>
<div class="abs" style="left:382.500px;top:180px;width:1844px;height:.6px;background:#2a2a2a"></div>
<div class="abs" style="left:2227.500px;top:147px;width:2.500px;height:1261px;background:#151515"></div>
<svg class="abs" style="left:2205.500px;top:158px" width="10.500" height="10.500" viewBox="0 0 12 12" fill="none" stroke="#f0f0f0" stroke-width="1.700"><path d="M1 1l10 10M11 1L1 11"/></svg>
<div class="abs" id="cv" style="left:382.500px;top:180.600px;width:1844px;height:1209.400px;overflow:hidden">
 <!-- coords inside are page coords minus (382.5,182) via transform -->
 <div style="position:absolute;left:-382.500px;top:-180.600px;width:2560px;height:1440px">
  <div class="abs" style="left:488px;top:100px;width:1555.500px;height:108px;border:2px solid #5d5fa3;box-sizing:border-box"></div>
  <div class="abs" style="left:500.500px;top:100px;width:1531px;height:96.800px;background:#fff;box-shadow:0 0 1.500px 1.500px #a0a0a0"></div>
  <div class="abs" style="left:1265px;top:100px;width:1.300px;height:98px;background:#9c9c9c"></div>
  <div class="abs" style="left:488px;top:294px;width:1555.500px;height:1200px;border:2px solid #5d5fa3;box-sizing:border-box"></div>
  <div class="abs" style="left:500.500px;top:306.500px;width:1531px;height:1200px;background:#fff;box-shadow:0 0 1.500px 1.500px #a0a0a0"></div>
  <div class="abs" style="left:1265px;top:305px;width:1.300px;height:1200px;background:#9c9c9c"></div>
  <span class="t d" style="left:555.00px;top:357.65px;font-size:15px;letter-spacing:0.433px;">inhabited tiles - tiles that already contain a</span>
<span class="t d" style="left:555.00px;top:375.65px;font-size:15px;letter-spacing:0.538px;">critter.</span>
<span class="t d i" style="left:560.00px;top:409.40px;font-size:14.8px;letter-spacing:0.099px;">[INSERT IMAGE: place-locations-squash-2.svg</span>
<span class="t d i" style="left:652.00px;top:427.15px;font-size:14.8px;letter-spacing:0.708px;">WIDTH:svg-66]</span>
<span class="t d i" style="left:575.75px;top:467.65px;font-size:14.8px;letter-spacing:-0.095px;">If any critter on that tile cannot migrate to a</span>
<span class="t d i" style="left:555.50px;top:485.65px;font-size:14.8px;letter-spacing:-0.198px;">connecting biome, it is returned to the player's hand</span>
<span class="t d" style="left:555.00px;top:527.15px;font-size:15px;letter-spacing:0.505px;">If there are multiple uninhabited tiles with</span>
<span class="t d" style="left:555.00px;top:545.15px;font-size:15px;letter-spacing:0.462px;">uncontrolled biomes at this step of your turn,</span>
<span class="t d" style="left:555.00px;top:562.90px;font-size:15px;letter-spacing:0.271px;">you may place 1 critter per tile.</span>
<span class="t d i" style="left:562.50px;top:596.90px;font-size:14.8px;letter-spacing:0.147px;">[INSERT IMAGE: place-locations-migrate.svg</span>
<span class="t d i" style="left:652.00px;top:614.65px;font-size:14.8px;letter-spacing:0.708px;">WIDTH:svg-66]</span>
<span class="t d i" style="left:558.00px;top:655.40px;font-size:14.8px;letter-spacing:-0.096px;">This blue critter can migrate to another tile within</span>
<span class="t d i" style="left:655.75px;top:673.40px;font-size:14.8px;letter-spacing:-0.191px;">its current biome</span>
<span class="t d" style="left:555.00px;top:714.40px;font-size:15px;letter-spacing:0.476px;">An uninhabited Uno tile is considered</span>
<span class="t d" style="left:555.00px;top:732.40px;font-size:15px;letter-spacing:0.414px;">controlled if it connects to an existing biome</span>
<span class="t d" style="left:555.00px;top:750.15px;font-size:15px;letter-spacing:0.350px;">occupied by a critter. This is because a single</span>
<span class="t d" style="left:555.00px;top:768.15px;font-size:15px;letter-spacing:0.429px;">critter has influence over the entire connected</span>
<span class="t d" style="left:555.00px;top:786.15px;font-size:15px;letter-spacing:0.352px;">biome across multiple tiles.</span>
<span class="t d i" style="left:557.00px;top:819.65px;font-size:14.8px;letter-spacing:0.110px;">[INSERT IMAGE: place-locations-migrate-2.svg</span>
<span class="t d i" style="left:652.00px;top:837.40px;font-size:14.8px;letter-spacing:0.708px;">WIDTH:svg-66]</span>
<span class="t d i" style="left:569.00px;top:878.90px;font-size:14.8px;letter-spacing:-0.155px;">The biome is still controlled by blue but the tile</span>
<span class="t d i" style="left:597.00px;top:896.90px;font-size:14.8px;letter-spacing:-0.184px;">now has a free critter placement area</span>
<span class="t d" style="left:614.00px;top:979.65px;font-size:26px;letter-spacing:0.124px;">Collect resources</span>
<span class="t d" style="left:555.00px;top:1016.40px;font-size:15px;letter-spacing:0.331px;">At the end of your turn, collect 1 x resource</span>
<span class="t d" style="left:555.00px;top:1034.40px;font-size:15px;letter-spacing:0.367px;">for each biome you control.</span>
<span class="t d" style="left:555.00px;top:1067.90px;font-size:15px;letter-spacing:0.372px;">Each biome consists of all the connecting</span>
<span class="t d" style="left:555.00px;top:1085.90px;font-size:15px;letter-spacing:0.346px;">areas of the same colour.</span>
<span class="t d i" style="left:555.00px;top:1118.90px;font-size:14.8px;letter-spacing:-0.163px;">For example:  Player One in turn one will always</span>
<span class="t d i" style="left:555.00px;top:1136.90px;font-size:14.8px;letter-spacing:-0.307px;">collect 3 resources from their controlled biomes.</span>
<span class="t d i" style="left:556.50px;top:1170.65px;font-size:14.8px;letter-spacing:0.460px;">[INSERT IMAGE: place-split.svg WIDTH:svg-</span>
<span class="t d i" style="left:694.50px;top:1188.40px;font-size:14.8px;letter-spacing:-0.281px;">66]</span>
<span class="t d i" style="left:560.75px;top:1229.65px;font-size:14.8px;letter-spacing:-0.152px;">This tile placement by Pink can split Blue's biome</span>
<span class="t d i" style="left:617.75px;top:1247.65px;font-size:14.8px;letter-spacing:-0.209px;">whilst still connecting an edge</span>
<span class="t d" style="left:555.00px;top:1320.65px;font-size:15px;letter-spacing:0.432px;">If multiple of your critters are on the same tile</span>
<span class="t d" style="left:892.50px;top:357.65px;font-size:15px;letter-spacing:0.292px;">but on different biomes, collect 1 x resource</span>
<span class="t d" style="left:892.50px;top:375.65px;font-size:15px;letter-spacing:0.234px;">for each biome.</span>
<span class="t d i" style="left:900.25px;top:409.40px;font-size:14.8px;letter-spacing:0.460px;">[INSERT IMAGE: place-split-2.svg WIDTH:</span>
<span class="t d i" style="left:1019.50px;top:427.15px;font-size:14.8px;letter-spacing:-0.036px;">svg-66]</span>
<span class="t d i" style="left:904.00px;top:467.65px;font-size:14.8px;letter-spacing:-0.287px;">Blue has been pushed onto one tile and had their</span>
<span class="t d i" style="left:1010.75px;top:485.65px;font-size:14.8px;letter-spacing:-0.336px;">biome split</span>
<span class="t d" style="left:892.50px;top:527.15px;font-size:15px;letter-spacing:0.427px;">If multiple critters share a biome (due to</span>
<span class="t d" style="left:892.50px;top:545.15px;font-size:15px;letter-spacing:0.308px;">Cooperative critters), only collect 1 resource</span>
<span class="t d" style="left:892.50px;top:562.90px;font-size:15px;letter-spacing:0.492px;">for that biome, see Herding Critters for ways</span>
<span class="t d" style="left:892.50px;top:580.90px;font-size:15px;letter-spacing:0.313px;">to increase this.</span>
<span class="t d" style="left:892.50px;top:614.40px;font-size:15px;letter-spacing:-0.155px;"><s>&lt;</s>!-- {{<s>&lt;</s> dropdown "<i>Example</i>" <s>&gt;</s>}}</span>
<span class="t d" style="left:892.50px;top:647.65px;font-size:15px;letter-spacing:0.255px;">{{<s>&lt;</s> /dropdown <s>&gt;</s>}} --<s>&gt;</s></span>
<span class="t d" style="left:892.50px;top:681.40px;font-size:15px;letter-spacing:0.129px;"><s>&lt;</s>details<s>&gt;</s></span>
<span class="t d" style="left:892.50px;top:714.40px;font-size:15px;letter-spacing:0.604px;"><s>&lt;</s>summary<s>&gt;</s><s>&lt;</s>i<s>&gt;</s>Example<s>&lt;</s>/i<s>&gt;</s><s>&lt;</s>/summary<s>&gt;</s></span>
<span class="t d i" style="left:895.00px;top:748.40px;font-size:14.8px;letter-spacing:0.445px;">[INSERT IMAGE: place-join.svg WIDTH:svg-</span>
<span class="t d i" style="left:1032.00px;top:766.15px;font-size:14.8px;letter-spacing:-0.281px;">66]</span>
<span class="t d i" style="left:899.00px;top:806.90px;font-size:14.8px;letter-spacing:-0.182px;">Blue reconnects a biome, migrating Pink from the</span>
<span class="t d i" style="left:1032.50px;top:824.90px;font-size:14.8px;letter-spacing:-0.052px;">tile</span>
<span class="t d" style="left:892.50px;top:865.90px;font-size:15px;letter-spacing:0.484px;"><s>&lt;</s>/details<s>&gt;</s></span>
<span class="t d" style="left:892.50px;top:934.15px;font-size:18px;letter-spacing:0.361px;">Maximum resources</span>
<span class="t d i" style="left:902.00px;top:969.40px;font-size:14.8px;letter-spacing:0.444px;">[INSERT IMAGE: place-join-2.svg WIDTH:</span>
<span class="t d i" style="left:1019.50px;top:986.90px;font-size:14.8px;letter-spacing:-0.036px;">svg-66]</span>
<span class="t d i" style="left:912.75px;top:1028.40px;font-size:14.8px;letter-spacing:-0.116px;">Now two critters are on this biome, an equal</span>
<span class="t d i" style="left:921.50px;top:1046.40px;font-size:14.8px;letter-spacing:-0.188px;">number of critters are removed per player</span>
<span class="t d" style="left:892.50px;top:1087.65px;font-size:15px;letter-spacing:0.433px;">You can hold no more than 7 resources after</span>
<span class="t d" style="left:892.50px;top:1105.65px;font-size:15px;letter-spacing:0.344px;">collection, if you have greater than 7, discard</span>
<span class="t d" style="left:892.50px;top:1123.40px;font-size:15px;letter-spacing:0.380px;">any of your choosing down to 7. See the</span>
<span class="t d" style="left:892.50px;top:1141.40px;font-size:15px;letter-spacing:0.434px;">Volcanic Power Bountiful Resources to</span>
<span class="t d" style="left:892.50px;top:1159.40px;font-size:15px;letter-spacing:0.498px;">increase the maximum.</span>
<span class="t d" style="left:892.50px;top:1192.90px;font-size:15px;letter-spacing:0.377px;">If a certain resource has been depleted from</span>
<span class="t d" style="left:892.50px;top:1210.90px;font-size:15px;letter-spacing:0.412px;">the supply, you cannot collect that resource.</span>
<span class="t d" style="left:1436.00px;top:361.40px;font-size:26px;letter-spacing:0.295px;">Volcanoes</span>
<span class="t d" style="left:1340.50px;top:398.40px;font-size:15px;letter-spacing:-0.092px;"><s>&lt;</s>span class = "svg-33"<s>&gt;</s></span>
<span class="t d" style="left:1340.50px;top:431.40px;font-size:15px;letter-spacing:0.446px;">![The volcano tile](Lava-st.png)</span>
<span class="t d" style="left:1340.50px;top:465.15px;font-size:15px;letter-spacing:0.544px;"><s>&lt;</s>/span<s>&gt;</s></span>
<span class="t d" style="left:1340.50px;top:498.40px;font-size:15px;letter-spacing:0.452px;">Once a Volcano tile is purchased, it must be</span>
<span class="t d" style="left:1340.50px;top:516.40px;font-size:15px;letter-spacing:0.434px;">unleashed on a land tile. This activates the</span>
<span class="t d" style="left:1340.50px;top:534.40px;font-size:15px;letter-spacing:0.359px;">volcano - add 1 critter from your hand onto</span>
<span class="t d" style="left:1340.50px;top:552.40px;font-size:15px;letter-spacing:0.456px;">the selected power on the Volcanic Power</span>
<span class="t d" style="left:1340.50px;top:570.40px;font-size:15px;letter-spacing:0.420px;">Grid, this unlocks the power for you.</span>
<span class="t d i" style="left:1349.75px;top:603.90px;font-size:14.8px;letter-spacing:0.444px;">[INSERT IMAGE: place-join-3.svg WIDTH:</span>
<span class="t d i" style="left:1467.25px;top:621.40px;font-size:14.8px;letter-spacing:-0.036px;">svg-66]</span>
<span class="t d i" style="left:1345.25px;top:662.65px;font-size:14.8px;letter-spacing:-0.217px;">Blue may now claim the medium or dark biome on</span>
<span class="t d i" style="left:1377.75px;top:680.65px;font-size:14.8px;letter-spacing:-0.101px;">this tile during the Place Critters step.</span>
<span class="t d" style="left:1340.50px;top:723.40px;font-size:18px;letter-spacing:0.252px;">Activating a volcano</span>
<span class="t d" style="left:1340.50px;top:758.15px;font-size:15px;letter-spacing:0.469px;">The volcano immediately wipes out any</span>
<span class="t d" style="left:1340.50px;top:776.15px;font-size:15px;letter-spacing:0.469px;">critters on the target tile (friend or foe), return</span>
<span class="t d" style="left:1340.50px;top:794.15px;font-size:15px;letter-spacing:0.471px;">critters to the owner's hand; standard</span>
<span class="t d" style="left:1340.50px;top:812.15px;font-size:15px;letter-spacing:0.448px;">migration rules have no effect (see Volcanic</span>
<span class="t d" style="left:1340.50px;top:830.15px;font-size:15px;letter-spacing:0.455px;">Migration for ways to avoid this).</span>
<span class="t d" style="left:1340.50px;top:863.90px;font-size:15px;letter-spacing:0.162px;"><s>&lt;</s>span class="svg-row"<s>&gt;</s></span>
<span class="t d i" style="left:1344.75px;top:897.15px;font-size:14.8px;letter-spacing:0.488px;">[INSERT IMAGE: place-critters.svg WIDTH:</span>
<span class="t d i" style="left:1468.00px;top:915.15px;font-size:14.8px;letter-spacing:-0.370px;">svg-75]</span>
<span class="t d i" style="left:1416.50px;top:955.90px;font-size:14.8px;letter-spacing:-0.112px;">Simple Place Critter step</span>
<span class="t d i" style="left:1346.00px;top:997.15px;font-size:14.8px;letter-spacing:0.147px;">[INSERT IMAGE: place-critters-controlled.svg</span>
<span class="t d i" style="left:1438.50px;top:1015.15px;font-size:14.8px;letter-spacing:0.500px;">WIDTH:svg-75]</span>
<span class="t d i" style="left:1342.25px;top:1055.65px;font-size:14.8px;letter-spacing:-0.195px;">Controlled biomes and inhabited tiles mean critters</span>
<span class="t d i" style="left:1426.50px;top:1073.40px;font-size:14.8px;letter-spacing:-0.392px;">can not be placed here</span>
<span class="t d" style="left:1340.50px;top:1114.65px;font-size:15px;letter-spacing:0.544px;"><s>&lt;</s>/span<s>&gt;</s></span>
<span class="t d" style="left:1340.50px;top:1181.40px;font-size:15px;letter-spacing:0.344px;">Playing a volcano counts as your one Place a</span>
<span class="t d" style="left:1340.50px;top:1199.40px;font-size:15px;letter-spacing:0.573px;">Tile step in your turn. Number the</span>
<span class="t d" style="left:1340.50px;top:1217.40px;font-size:15px;letter-spacing:0.355px;">surrounding tiles clockwise and roll a six sided</span>
<span class="t d" style="left:1340.50px;top:1235.40px;font-size:15px;letter-spacing:0.350px;">dice. The lava can only flow downhill, so re-</span>
<span class="t d" style="left:1340.50px;top:1253.40px;font-size:15px;letter-spacing:0.404px;">roll any numbers rolled that are for tile stacks</span>
<span class="t d" style="left:1340.50px;top:1271.40px;font-size:15px;letter-spacing:0.479px;">at the same height or higher than the initial</span>
<span class="t d" style="left:1340.50px;top:1289.40px;font-size:15px;letter-spacing:0.316px;">target stack.</span>
<span class="t d" style="left:1677.00px;top:357.65px;font-size:15px;letter-spacing:0.198px;"><s>&lt;</s>span class="svg-row"<s>&gt;</s></span>
<span class="t d" style="left:1677.00px;top:391.40px;font-size:15px;letter-spacing:0.173px;">{{<s>&lt;</s> webp "volcano-activate-25D-4.webp" "svg-</span>
<span class="t d" style="left:1677.00px;top:409.40px;font-size:15px;letter-spacing:0.363px;">66" "Pink activates a volcano on a high point</span>
<span class="t d" style="left:1677.00px;top:427.15px;font-size:15px;letter-spacing:0.204px;">controlled by Blue"<s>&gt;</s>}}</span>
<span class="t d" style="left:1677.00px;top:460.65px;font-size:15px;letter-spacing:0.173px;">{{<s>&lt;</s> webp "volcano-activate-25D-6.webp" "svg-</span>
<span class="t d" style="left:1677.00px;top:478.65px;font-size:15px;letter-spacing:0.179px;">66" "The ocean space is labelled as 1, the</span>
<span class="t d" style="left:1677.00px;top:496.40px;font-size:15px;letter-spacing:0.424px;">surrounding tiles are numbered clockwise, the</span>
<span class="t d" style="left:1677.00px;top:514.40px;font-size:15px;letter-spacing:0.379px;">dice is rolled. As the tile numbered 6 is at the</span>
<span class="t d" style="left:1677.00px;top:532.40px;font-size:15px;letter-spacing:0.423px;">same height and volcanos only flow downhill,</span>
<span class="t d" style="left:1677.00px;top:550.40px;font-size:15px;letter-spacing:0.113px;">a 6 is re-rolled"<s>&gt;</s>}}</span>
<span class="t d" style="left:1677.00px;top:583.90px;font-size:15px;letter-spacing:0.173px;">{{<s>&lt;</s> webp "volcano-activate-25D-7.webp" "svg-</span>
<span class="t d" style="left:1677.00px;top:601.90px;font-size:15px;letter-spacing:0.390px;">66" "The lava flows onto the numbered tile</span>
<span class="t d" style="left:1677.00px;top:619.65px;font-size:15px;letter-spacing:0.324px;">that matches the dice roll"<s>&gt;</s>}}</span>
<span class="t d" style="left:1677.00px;top:653.40px;font-size:15px;letter-spacing:0.669px;"><s>&lt;</s>/span<s>&gt;</s></span>
<span class="t d" style="left:1677.00px;top:686.90px;font-size:15px;letter-spacing:0.444px;">Now the lava is flowing, it will continue to</span>
<span class="t d" style="left:1677.00px;top:704.90px;font-size:15px;letter-spacing:0.462px;">progress downhill every turn until it reaches</span>
<span class="t d" style="left:1677.00px;top:722.65px;font-size:15px;letter-spacing:0.271px;">the ocean.</span>
<span class="t d" style="left:1724.75px;top:798.40px;font-size:26px;">Islands &amp; sacrifices</span>
<span class="t d" style="left:1677.00px;top:834.40px;font-size:15px;letter-spacing:0.198px;"><s>&lt;</s>span class="svg-row"<s>&gt;</s></span>
<span class="t d i" style="left:1686.00px;top:868.15px;font-size:14.8px;letter-spacing:0.143px;">[INSERT IMAGE: place-critters-uncontrolled.</span>
<span class="t d i" style="left:1763.50px;top:885.90px;font-size:14.8px;letter-spacing:0.411px;">svg WIDTH:svg-75]</span>
<span class="t d i" style="left:1684.25px;top:927.15px;font-size:14.8px;letter-spacing:-0.297px;">Uncontrolled biomes and uninhabited tiles mean 1</span>
<span class="t d i" style="left:1732.75px;top:945.15px;font-size:14.8px;letter-spacing:-0.282px;">critter per tile can be placed here</span>
<span class="t d i" style="left:1681.50px;top:986.40px;font-size:14.8px;letter-spacing:0.133px;">[INSERT IMAGE: place-critters-controlled-tile.</span>
<span class="t d i" style="left:1763.50px;top:1003.90px;font-size:14.8px;letter-spacing:0.411px;">svg WIDTH:svg-75]</span>
<span class="t d i" style="left:1691.00px;top:1044.65px;font-size:14.8px;letter-spacing:-0.150px;">These Uno tiles, despite being uninhabited, are</span>
<span class="t d i" style="left:1774.25px;top:1062.65px;font-size:14.8px;letter-spacing:-0.222px;">controlled by Pink</span>
<span class="t d" style="left:1677.00px;top:1103.90px;font-size:15px;letter-spacing:0.669px;"><s>&lt;</s>/span<s>&gt;</s></span>
<span class="t d" style="left:1677.00px;top:1137.15px;font-size:15px;letter-spacing:0.368px;">Critters and resources may be sacrificed across</span>
<span class="t d" style="left:1677.00px;top:1155.15px;font-size:15px;letter-spacing:0.441px;">multiple turns to "lock in" points, and</span>
<span class="t d" style="left:1677.00px;top:1173.15px;font-size:15px;letter-spacing:0.332px;">summon and place a 3 tile island.</span>
<span class="t d" style="left:1677.00px;top:1207.90px;font-size:18px;letter-spacing:-0.080px;">Sacrifices</span>
<span class="t d" style="left:1677.00px;top:1242.90px;font-size:15px;letter-spacing:0.408px;">There are three ways to make sacrifices to the</span>
<span class="t d" style="left:1677.00px;top:1260.90px;font-size:15px;letter-spacing:0.403px;">critter crater:</span>
<span class="t d" style="left:1677.00px;top:1294.40px;font-size:15px;letter-spacing:0.352px;">- If you cannot buy a tile, you may sacrifice a</span>
<span class="t d" style="left:1677.00px;top:1312.15px;font-size:15px;letter-spacing:0.512px;">critter from your hand directly to the crater,</span>
  <!-- text frames -->
  <div class="abs fr" style="left:554.300px;top:359.300px;width:639.700px;height:978px"></div>
  <div class="abs fc" style="left:854.800px;top:360px;height:976px"></div>
  <div class="abs fc" style="left:891.300px;top:360px;height:976px"></div>
  <div class="abs fr" style="left:1338.300px;top:359.300px;width:640.200px;height:978px"></div>
  <div class="abs fc" style="left:1639.800px;top:360px;height:976px"></div>
  <div class="abs fc" style="left:1676px;top:360px;height:976px"></div>
 </div>
</div>
<div class="abs" style="left:2219px;top:358.700px;width:5px;height:41.700px;background:#808080;border-radius:2.500px"></div>
<div class="abs" style="left:1046px;top:1399.300px;width:534px;height:4.700px;background:#808080;border-radius:2.500px"></div>
<!-- ===== status bar ===== -->
<div class="abs" style="left:0;top:1408px;width:2560px;height:1.500px;background:#1a1a1a"></div>
<div class="abs" style="left:0;top:1409.500px;width:2560px;height:28.500px;background:#404040"></div>
<div class="abs" style="left:0;top:1438px;width:2560px;height:2px;background:#2c2c2c"></div>
<div class="abs" style="left:415px;top:1438.300px;width:45px;height:1.700px;background:#6a6a6a"></div>
<svg class="abs" style="left:8px;top:1416px" width="15" height="15" viewBox="0 0 15 15" fill="#8a8a8a"><rect x="0" y=".5" width="1.800" height="14"/><path d="M14 .8v13.400L3 7.500z"/></svg>
<svg class="abs" style="left:33.500px;top:1416px" width="11" height="15" viewBox="0 0 11 15" fill="#8a8a8a"><path d="M10.500 .8v13.400L.5 7.500z"/></svg>
<svg class="abs" style="left:156px;top:1416px" width="11" height="15" viewBox="0 0 11 15" fill="#e8e8e8"><path d="M.5 .8v13.400l10-6.700z"/></svg>
<svg class="abs" style="left:178px;top:1416px" width="15" height="15" viewBox="0 0 15 15" fill="#e8e8e8"><rect x="12.500" y=".5" width="1.800" height="14"/><path d="M.5 .8v13.400L11 7.500z"/></svg>
<svg class="abs" style="left:202px;top:1415px" width="17" height="19" viewBox="0 0 17 19" fill="none" stroke="#d0d0d0" stroke-width="1.200"><path d="M14 3.500h2.300v14.800H4.500V16"/><rect x=".7" y=".7" width="12.600" height="15.200"/><path d="M3 4h8" stroke-width="2"/><path d="M3 7.500h8M3 10h8M3 12.500h8" stroke-width="1.100"/></svg>
<svg class="abs" style="left:227.500px;top:1415px" width="18" height="19" viewBox="0 0 18 19" fill="none" stroke="#d0d0d0" stroke-width="1.300"><rect x=".7" y=".7" width="11" height="11" rx="1.500"/><path d="M3 4h6.500" stroke-width="1.800"/><rect x="6" y="6.500" width="11" height="11.500" rx="1.500" fill="#404040"/><path d="M5 12.500a4 3.500 0 0 0 7.500 1.200M13 11.500a4 3.500 0 0 0-7.500-1.200" stroke-width="1.400"/></svg>
<svg class="abs" style="left:261px;top:1415px" width="20" height="20" viewBox="0 0 20 20"><path d="M12 2h6v16H6.500v-3.500" fill="none" stroke="#d0d0d0" stroke-width="1.300"/><circle cx="8.200" cy="7.500" r="7" fill="#e8233a"/><path d="M5.700 5l5 5M10.700 5l-5 5" stroke="#3a0a10" stroke-width="1.800"/></svg>

<!-- ===== right panel ===== -->
<div class="abs" style="left:2230px;top:147px;width:330px;height:36px;background:#202020"></div>
<div class="abs" style="left:2230px;top:183px;width:330px;height:490px;background:#383838"></div>
<div class="abs" style="left:2238.500px;top:153px;width:5.500px;height:23px;background:#383838;border-radius:3px"></div>
<div class="abs" style="left:2383px;top:150.500px;width:114px;height:26px;background:#363636;border-radius:6px"></div>
<div class="abs cbx" style="left:2534.500px;top:154px"></div>
<svg class="abs" style="left:2539px;top:159px" width="11" height="10" viewBox="0 0 11 10" fill="none" stroke="#f0f0f0" stroke-width="1.700"><path d="M1 1.300l4.500 6.700L10 1.300"/></svg>
<svg class="abs gear" style="left:2539.300px;top:190px" width="13.600" height="13.600" viewBox="0 0 16 16"><path fill-rule="evenodd" d="M6.700 0h2.600l.4 2.100 1.300.55 1.800-1.200 1.800 1.800-1.200 1.800.55 1.300 2.100.4v2.600l-2.100.4-.55 1.300 1.200 1.800-1.800 1.800-1.800-1.200-1.300.55-.4 2.100H6.700l-.4-2.100-1.300-.55-1.800 1.200-1.800-1.800 1.200-1.800-.55-1.300L0 9.300V6.700l2.100-.4.550-1.300-1.200-1.800 1.800-1.800 1.800 1.200 1.300-.55zM8 5.200a2.800 2.800 0 1 0 0 5.600 2.800 2.800 0 0 0 0-5.600z"/></svg>
<div class="abs inp" style="left:2235.500px;top:214px;width:319.500px;height:24px"></div>
<svg class="abs" style="left:2239px;top:217px" width="20" height="17" viewBox="0 0 20 17" fill="none" stroke="#e8e8e8" stroke-width="1.400"><circle cx="6.300" cy="6.300" r="5.200"/><path d="M10 10l4.800 5.500"/><path d="M14 5.300l2.200 2.300 2.200-2.300" stroke-width="1.500"/></svg>
<svg class="abs" style="left:2538.500px;top:219.700px" width="13" height="13" viewBox="0 0 13 13"><circle cx="6.500" cy="6.500" r="6.300" fill="#f0f0f0"/><path d="M4 4l5 5M9 4l-5 5" stroke="#2a2a2a" stroke-width="1.700"/></svg>
<svg class="abs gear" style="left:2539.300px;top:275px" width="13.600" height="13.600" viewBox="0 0 16 16"><path fill-rule="evenodd" d="M6.700 0h2.600l.4 2.100 1.300.55 1.800-1.200 1.800 1.800-1.200 1.800.55 1.300 2.100.4v2.600l-2.100.4-.55 1.300 1.200 1.800-1.800 1.800-1.800-1.200-1.300.55-.4 2.100H6.700l-.4-2.100-1.300-.55-1.800 1.200-1.800-1.800 1.200-1.800-.55-1.300L0 9.300V6.700l2.100-.4.550-1.300-1.200-1.800 1.800-1.800 1.800 1.200 1.300-.55zM8 5.200a2.800 2.800 0 1 0 0 5.600 2.800 2.800 0 0 0 0-5.600z"/></svg>
<div class="abs inp" style="left:2235.500px;top:299.300px;width:319.500px;height:23.500px"></div>
<svg class="abs chev" style="left:2243px;top:306.500px" width="8" height="6" viewBox="0 0 9 7"><path d="M1 1.300l3.500 3.700L8 1.300" stroke-width="1.600"/></svg>
<svg class="abs" style="left:2538.500px;top:304.500px" width="13" height="13" viewBox="0 0 13 13"><circle cx="6.500" cy="6.500" r="6.300" fill="#f0f0f0"/><path d="M4 4l5 5M9 4l-5 5" stroke="#2a2a2a" stroke-width="1.700"/></svg>
<div class="abs dd" style="left:2283px;top:362.500px;width:122.500px;height:22.500px"></div>
<svg class="abs chev" style="left:2392.500px;top:370px" width="9" height="7" viewBox="0 0 9 7"><path d="M1 1.300l3.500 3.700L8 1.300"/></svg>
<div class="abs" style="left:2238px;top:394.300px;width:94px;height:23.700px;background:#515151;border-radius:4px"></div>
<div class="abs" style="left:2340px;top:394.300px;width:93.700px;height:23.700px;background:#464646;border-radius:4px"></div>
<div class="abs" style="left:2442.200px;top:394.300px;width:93.500px;height:23.700px;background:#464646;border-radius:4px"></div>
<div class="abs" style="left:2238px;top:425px;width:315.500px;height:240px;background:#343434;border:1px solid #2a2a2a;box-sizing:border-box"></div>
<div class="abs" style="left:2230px;top:672.500px;width:330px;height:4.500px;background:#1a1a1a"></div>
<!-- layers -->
<div class="abs" style="left:2230px;top:677px;width:330px;height:36px;background:#202020"></div>
<div class="abs" style="left:2238.500px;top:683px;width:5.500px;height:23px;background:#383838;border-radius:3px"></div>
<div class="abs" style="left:2254.500px;top:680.500px;width:48px;height:25.500px;background:#363636;border-radius:6px"></div>
<div class="abs cbx" style="left:2534.500px;top:684.500px"></div>
<svg class="abs" style="left:2539px;top:689.500px" width="11" height="10" viewBox="0 0 11 10" fill="none" stroke="#f0f0f0" stroke-width="1.700"><path d="M1 1.300l4.500 6.700L10 1.300"/></svg>
<div class="abs" style="left:2230px;top:712.500px;width:330px;height:41px;background:#3a3a3a"></div>
<div class="abs" style="left:2298px;top:722px;width:68px;height:23.500px;background:#333;border-radius:4px"></div>
<svg class="abs chev" style="left:2353.500px;top:729.500px" width="9" height="7" viewBox="0 0 9 7" style="stroke:#aaa"><path d="M1 1.300l3.500 3.700L8 1.300"/></svg>
<div class="abs" style="left:2376px;top:722px;width:121.500px;height:23.500px;background:#333;border-radius:4px"></div>
<svg class="abs chev" style="left:2483px;top:730px" width="9" height="7" viewBox="0 0 9 7"><path d="M1 1.300l3.500 3.700L8 1.300"/></svg>
<svg class="abs gear" style="left:2504.500px;top:725.500px" width="15" height="15" viewBox="0 0 16 16"><path fill-rule="evenodd" fill="#ececec" d="M6.700 0h2.600l.4 2.100 1.300.55 1.800-1.200 1.800 1.800-1.200 1.800.55 1.300 2.100.4v2.600l-2.100.4-.55 1.300 1.200 1.800-1.800 1.800-1.800-1.200-1.300.55-.4 2.100H6.700l-.4-2.100-1.300-.55-1.800 1.200-1.800-1.800 1.200-1.800-.55-1.300L0 9.300V6.700l2.100-.4.550-1.300-1.200-1.800 1.800-1.800 1.800 1.200 1.300-.55zM8 5.200a2.800 2.800 0 1 0 0 5.600 2.800 2.800 0 0 0 0-5.600z"/></svg>
<svg class="abs" style="left:2534.500px;top:724.500px" width="11" height="16" viewBox="0 0 11 16"><path d="M2.500 7V4.200a3 3 0 0 1 6 0V5" fill="none" stroke="#f0f0f0" stroke-width="1.500"/><rect x=".5" y="7" width="10" height="8.300" rx="1" fill="#f0f0f0"/></svg>
<div class="abs" style="left:2230px;top:753.500px;width:330px;height:1.500px;background:#1c1c1c"></div>
<div class="abs" style="left:2230px;top:755px;width:330px;height:39px;background:#383838"></div>

<div class="abs" style="left:2250.500px;top:755px;width:3px;height:39px;background:#30c9a8"></div>
<div class="abs" style="left:2253.500px;top:755px;width:37.500px;height:39px;background:#2b2b2b"></div>
<div class="abs" style="left:2291px;top:755px;width:1.200px;height:39px;background:#1c1c1c"></div>
<div class="abs" style="left:2516px;top:755px;width:1.200px;height:39px;background:#1c1c1c"></div>
<div class="abs" style="left:2230px;top:794px;width:330px;height:1.500px;background:#1c1c1c"></div>
<div class="abs" style="left:2230px;top:795.500px;width:330px;height:370.500px;background:#202020"></div>
<svg class="abs" style="left:2235.500px;top:760.500px" width="11" height="32" viewBox="0 0 11 32" fill="none" stroke="#9a9a9a" stroke-width="1.100"><rect x=".8" y=".8" width="8.900" height="11.400"/><path d="M2.800 4h5M2.800 6.500h5M2.800 9h5"/><path d="M2 18.500l5 3-5 3" stroke-width="1.300"/></svg>
<svg class="abs" style="left:2530px;top:768px" width="17" height="12" viewBox="0 0 17 12"><path d="M.5 6C3 2 5.500.5 8.500.5S14 2 16.500 6C14 10 11.500 11.500 8.500 11.500S3 10 .5 6z" fill="#f0f0f0"/><circle cx="8.500" cy="6" r="3.200" fill="#383838"/><circle cx="8.500" cy="6" r="1.600" fill="#f0f0f0"/></svg>
<!-- layers footer -->
<div class="abs" style="left:2230px;top:1166px;width:330px;height:38.500px;background:#383838"></div>
<svg class="abs" style="left:2239.500px;top:1173px" width="22" height="22" viewBox="0 0 22 22" fill="none" stroke="#e4e4e4" stroke-width="1.400"><path d="M11 3.500H1.500v16.800h16.800V11"/><path d="M8 14.500l1-3.800L18 1.700c.8-.8 2-.8 2.600-.1s.7 1.800-.1 2.600l-9 9z" stroke-linejoin="round"/></svg>
<svg class="abs" style="left:2311.500px;top:1175px" width="19" height="18" viewBox="0 0 19 18"><rect width="19" height="18" rx="1.500" fill="#e4e4e4"/><text x="9.500" y="14" style="font-family:'Liberation Sans',sans-serif;font-size:12.500px;font-weight:bold;letter-spacing:-1.200px" fill="#383838" text-anchor="middle">FX</text></svg>
<svg class="abs" style="left:2338px;top:1175px" width="18" height="18" viewBox="0 0 18 18"><rect width="18" height="18" rx="1.500" fill="#e4e4e4"/><circle cx="9" cy="9" r="4.800" fill="#383838"/></svg>
<svg class="abs" style="left:2363.500px;top:1175px" width="15" height="18" viewBox="0 0 15 18"><path d="M0 0h15L9.300 9 15 18H0l5.700-9z" fill="#e4e4e4"/></svg>
<svg class="abs" style="left:2387.500px;top:1175px" width="19" height="19" viewBox="0 0 19 19"><circle cx="9.500" cy="9.500" r="8.700" fill="none" stroke="#e4e4e4" stroke-width="1.300"/><path d="M3.500 15.800A8.700 8.700 0 0 0 15.800 3.500z" fill="#e4e4e4"/></svg>
<svg class="abs" style="left:2454px;top:1175px" width="19" height="19" viewBox="0 0 19 19"><rect x=".7" y=".7" width="17.600" height="17.600" fill="none" stroke="#e4e4e4" stroke-width="1.300"/><circle cx="8" cy="8" r="4" fill="#e4e4e4"/><rect x="9" y="9.500" width="6.500" height="6" fill="#e4e4e4" stroke="#383838" stroke-width="1"/></svg>
<svg class="abs" style="left:2479.500px;top:1176px" width="19" height="18" viewBox="0 0 19 18" fill="none" stroke="#e4e4e4" stroke-width="1.300"><path d="M.7 17.300V.7h7l2 3h8.600v13.600z"/><path d="M.7 5.500h9"/></svg>
<svg class="abs" style="left:2504px;top:1176px" width="17" height="17" viewBox="0 0 17 17" fill="#e4e4e4"><path d="M0 0h3.400v3.400H0zM6.800 0h3.400v3.400H6.800zM13.600 0H17v3.400h-3.400zM3.400 3.400h3.400v3.400H3.400zM10.200 3.400h3.400v3.400h-3.400zM0 6.800h3.400v3.400H0zM6.800 6.800h3.400v3.400H6.800zM13.600 6.800H17v3.400h-3.400zM3.400 10.200h3.400v3.400H3.400zM10.200 10.200h3.400v3.400h-3.400zM0 13.600h3.400V17H0zM6.800 13.600h3.400V17H6.800zM13.600 13.600H17V17h-3.400z"/></svg>
<svg class="abs" style="left:2531.500px;top:1174.500px" width="15" height="20" viewBox="0 0 15 20" fill="none" stroke="#e4e4e4" stroke-width="1.300"><path d="M.7 4.500c0-1.300.6-1.800 1.800-1.800h10c1.200 0 1.800.5 1.800 1.800M4.500 2.700V.8h6v1.900M2.200 5.800v13.400h10.600V5.800M5.600 6v9.500M9.400 6v9.500"/></svg>
<div class="abs" style="left:2230px;top:1204px;width:330px;height:2.500px;background:#1a1a1a"></div>
<!-- transform -->
<div class="abs" style="left:2230px;top:1206.500px;width:330px;height:36px;background:#202020"></div>
<div class="abs" style="left:2230px;top:1242.500px;width:330px;height:164.500px;background:#383838"></div>
<div class="abs" style="left:2230px;top:1407px;width:330px;height:1.500px;background:#1a1a1a"></div>
<div class="abs" style="left:2238.500px;top:1212.500px;width:5.500px;height:24px;background:#383838;border-radius:3px"></div>
<div class="abs" style="left:2254px;top:1210px;width:71px;height:26px;background:#363636;border-radius:6px"></div>
<div class="abs cbx" style="left:2535px;top:1214.300px"></div>
<svg class="abs" style="left:2539.500px;top:1219.300px" width="11" height="10" viewBox="0 0 11 10" fill="none" stroke="#f0f0f0" stroke-width="1.700"><path d="M1 1.300l4.500 6.700L10 1.300"/></svg>
<svg class="abs" style="left:2250px;top:1285px" width="46" height="46" viewBox="0 0 46 46" fill="#6c6c6c"><rect x="4" y="4" width="38" height="38"/><rect x="0" y="0" width="8" height="8"/><rect x="19" y="0" width="8" height="8"/><rect x="38" y="0" width="8" height="8"/><rect x="0" y="19" width="8" height="8"/><rect x="38" y="19" width="8" height="8"/><rect x="0" y="38" width="8" height="8"/><rect x="19" y="38" width="8" height="8"/><rect x="38" y="38" width="8" height="8"/></svg>
<div class="abs tf" style="left:2332px;top:1257.700px"></div>
<div class="abs tf" style="left:2448px;top:1257.700px"></div>
<div class="abs tf" style="left:2332px;top:1287.500px"></div>
<div class="abs tf" style="left:2448px;top:1287.500px"></div>
<div class="abs tf" style="left:2332px;top:1325.200px"></div>
<div class="abs tf" style="left:2448px;top:1325.200px"></div>
<svg class="abs chev" style="left:2399px;top:1334px" width="9" height="7" viewBox="0 0 9 7" style="stroke:#aaa"><path d="M1 1.300l3.500 3.700L8 1.300"/></svg>
<svg class="abs chev" style="left:2515px;top:1334px" width="9" height="7" viewBox="0 0 9 7"><path d="M1 1.300l3.500 3.700L8 1.300"/></svg>
<svg class="abs" style="left:2541.500px;top:1271.500px" width="11" height="27" viewBox="0 0 11 27" fill="none" stroke="#8a8a8a" stroke-width="1.300"><path d="M2 9V3a2 2 0 0 1 2-2h3a2 2 0 0 1 2 2v6M2 18v6a2 2 0 0 0 2 2h3a2 2 0 0 0 2-2v-6M0 13.500h3M8 13.500h3"/></svg>
<svg class="abs" style="left:2478.500px;top:1366.500px" width="21" height="19" viewBox="0 0 21 19" fill="none" stroke="#7c7c7c" stroke-width="1.300"><path d="M1 6V2.500A1.500 1.500 0 0 1 2.500 1H6M9.500 1h4M17 1h1.500A1.500 1.500 0 0 1 20 2.500V6M20 9.500v4M20 16.500v0A1.500 1.500 0 0 1 18.500 18H15"/><rect x=".5" y="9" width="11.500" height="9.500" rx="2" fill="#7c7c7c" stroke="none"/></svg>
<svg class="abs chev" style="left:2514px;top:1373.500px" width="9" height="7" viewBox="0 0 9 7"><path d="M1 1.300l3.500 3.700L8 1.300"/></svg>

<span class="t u" style="left:70.00px;top:14.00px;font-size:15px;color:#f2f2f2;transform:scaleX(0.9308);">File</span>
<span class="t u" style="left:124.00px;top:14.00px;font-size:15px;color:#f2f2f2;transform:scaleX(0.9668);">Edit</span>
<span class="t u" style="left:181.25px;top:14.00px;font-size:15px;color:#f2f2f2;transform:scaleX(1.0055);">Document</span>
<span class="t u" style="left:282.00px;top:14.00px;font-size:15px;color:#f2f2f2;transform:scaleX(0.9376);">Text</span>
<span class="t u" style="left:340.00px;top:14.00px;font-size:15px;color:#f2f2f2;transform:scaleX(0.9875);">Vector</span>
<span class="t u" style="left:414.00px;top:14.00px;font-size:15px;color:#f2f2f2;transform:scaleX(0.9349);">Pixel</span>
<span class="t u" style="left:476.00px;top:14.00px;font-size:15px;color:#f2f2f2;transform:scaleX(0.9326);">Layer</span>
<span class="t u" style="left:543.00px;top:14.00px;font-size:15px;color:#f2f2f2;transform:scaleX(0.9736);">View</span>
<span class="t u" style="left:607.00px;top:14.00px;font-size:15px;color:#f2f2f2;transform:scaleX(1.0233);">Window</span>
<span class="t u" style="left:694.40px;top:14.00px;font-size:15px;color:#f2f2f2;transform:scaleX(0.9722);">Help</span>
<span class="t u" style="left:103.75px;top:64.50px;font-size:14px;color:#c4c4c4;transform:scaleX(1.0704);">Vector</span>
<span class="t u" style="left:202.50px;top:64.50px;font-size:14px;color:#c4c4c4;transform:scaleX(0.9882);">Pixel</span>
<span class="t u" style="left:288.75px;top:64.50px;font-size:14px;color:#111;transform:scaleX(1.0286);">Layout</span>
<span class="t u" style="left:388.00px;top:64.50px;font-size:14px;color:#c4c4c4;transform:scaleX(1.0101);">Canva AI</span>
<span class="t u" style="left:502.75px;top:64.50px;font-size:14px;color:#c4c4c4;transform:scaleX(1.0523);">Typography</span>
<span class="t u" style="left:2359.00px;top:64.70px;font-size:14px;color:#f2f2f2;transform:scaleX(1.0214);">Export PNG</span>
<span class="t u" style="left:2505.00px;top:64.50px;font-size:15px;color:#fff;font-weight:bold;">?</span>
<span class="t u" style="left:18.75px;top:116.50px;font-size:14px;color:#f2f2f2;transform:scaleX(0.9241);">Lexend Deca</span>
<span class="t u" style="left:220.60px;top:116.50px;font-size:14px;color:#f2f2f2;transform:scaleX(0.9259);">Regular</span>
<span class="t u" style="left:421.00px;top:117.75px;font-size:14px;color:#f2f2f2;transform:scaleX(0.9955);">12 pt</span>
<span class="t u" style="left:1300.80px;top:117.80px;font-size:14px;color:#f2f2f2;transform:scaleX(0.9917);">[15 pt]</span>
<span class="t u" style="left:1561.70px;top:117.80px;font-size:14px;color:#f2f2f2;">1</span>
<span class="t u" style="left:1630.50px;top:117.80px;font-size:14px;color:#f2f2f2;transform:scaleX(0.9674);">10 mm</span>
<span class="t u" style="left:1883.60px;top:117.50px;font-size:14px;color:#f2f2f2;transform:scaleX(0.9654);">[No Style]</span>
<span class="t u" style="left:2132.00px;top:117.50px;font-size:14px;color:#f2f2f2;transform:scaleX(0.9670);">[No Style]</span>
<span class="t u" style="left:627.00px;top:118.00px;font-size:15.5px;color:#5c5c5c;transform:scaleX(1.0344);">AA</span>
<span class="t u" style="left:699.00px;top:116.00px;font-size:20.5px;color:#ececec;font-weight:bold;">B</span>
<span class="t u" style="left:739.00px;top:116.00px;font-size:20.5px;color:#5c5c5c;font-style:italic;font-weight:bold;">I</span>
<span class="t u" style="left:776.00px;top:116.00px;font-size:19px;color:#ececec;font-weight:bold;">U</span>
<span class="t u" style="left:817.00px;top:117.00px;font-size:19px;color:#dcdcdc;">S</span>
<span class="t u" style="left:854.70px;top:117.00px;font-size:19px;color:#dcdcdc;">S</span>
<span class="t u" style="left:893.75px;top:117.00px;font-size:19px;color:#dcdcdc;">S</span>
<span class="t u" style="left:971.90px;top:112.00px;font-size:17px;color:#e4e4e4;">A</span>
<span class="t u" style="left:530.00px;top:116.50px;font-size:19.5px;color:#dcdcdc;">A</span>
<span class="t u" style="left:573.00px;top:116.50px;font-size:19.5px;color:#dcdcdc;">A</span>
<span class="t u" style="left:1787.00px;top:116.00px;font-size:20px;color:#e0e0e0;transform:scaleX(1.0600);">fi</span>
<span class="t u" style="left:1843.00px;top:115.00px;font-size:22px;color:#dcdcdc;">a</span>
<span class="t u" style="left:2092.00px;top:116.00px;font-size:21px;color:#e4e4e4;">¶</span>
<span class="t u" style="left:79.60px;top:153.00px;font-size:14px;color:#f2f2f2;transform:scaleX(0.8765);">Pages</span>
<span class="t u" style="left:126.00px;top:153.00px;font-size:14px;color:#bdbdbd;transform:scaleX(0.8985);">Assets</span>
<span class="t u" style="left:176.00px;top:153.00px;font-size:14px;color:#bdbdbd;transform:scaleX(0.9353);">Stock</span>
<span class="t u" style="left:76.70px;top:185.50px;font-size:14px;color:#e6e6e6;transform:scaleX(1.0107);">Master Pages</span>
<span class="t u" style="left:186.00px;top:360.00px;font-size:14px;color:#e6e6e6;transform:scaleX(1.0679);">Master A</span>
<span class="t u" style="left:76.70px;top:563.50px;font-size:14px;color:#e6e6e6;transform:scaleX(0.9470);">Pages</span>
<span class="t u" style="left:175.00px;top:737.70px;font-size:14px;color:#e6e6e6;transform:scaleX(0.9784);">Pages 2,3</span>
<span class="t u" style="left:175.00px;top:916.50px;font-size:14px;color:#e6e6e6;transform:scaleX(0.9784);">Pages 4,5</span>
<span class="t u" style="left:175.00px;top:1095.50px;font-size:14px;color:#e6e6e6;transform:scaleX(0.9784);">Pages 6,7</span>
<span class="t u" style="left:175.00px;top:1274.00px;font-size:14px;color:#e6e6e6;transform:scaleX(0.9784);">Pages 8,9</span>
<span class="t u" style="left:393.00px;top:154.40px;font-size:14.5px;color:#f2f2f2;transform:scaleX(0.9559);">rulebook [Modified] (78.8%)</span>
<span class="t u" style="left:80.00px;top:1415.50px;font-size:14px;color:#e6e6e6;transform:scaleX(0.9200);">1 of 51</span>
<span class="t u" style="left:303.50px;top:1415.50px;font-size:14.5px;color:#bcbcbc;transform:scaleX(1.0203);"><b>Drag</b> to create Frame text. <b>Click</b> an object to select it.</span>
<span class="t u" style="left:2258.90px;top:154.20px;font-size:14px;color:#bdbdbd;transform:scaleX(0.9860);">Color</span>
<span class="t u" style="left:2303.90px;top:154.20px;font-size:14px;color:#bdbdbd;transform:scaleX(0.9296);">Swt</span>
<span class="t u" style="left:2338.00px;top:154.20px;font-size:14px;color:#bdbdbd;transform:scaleX(0.9439);">Stroke</span>
<span class="t u" style="left:2388.20px;top:154.20px;font-size:14px;color:#f2f2f2;transform:scaleX(0.9394);">Find and Replace</span>
<span class="t u" style="left:2238.20px;top:190.60px;font-size:14px;color:#b4b4b4;transform:scaleX(0.9106);">Find</span>
<span class="t u" style="left:2268.00px;top:216.90px;font-size:15.7px;color:#f2f2f2;transform:scaleX(0.9493);">&lt;span class="svg-row" &gt;</span>
<span class="t u" style="left:2238.20px;top:275.00px;font-size:14px;color:#b4b4b4;transform:scaleX(0.9506);">Replace with</span>
<span class="t u" style="left:2238.20px;top:334.10px;font-size:12.5px;color:#f2f2f2;transform:scaleX(0.9742);">Image; [No Style];</span>
<span class="t u" style="left:2238.20px;top:364.10px;font-size:12.5px;color:#a8a8a8;transform:scaleX(0.9172);">Scope:</span>
<span class="t u" style="left:2288.50px;top:364.75px;font-size:13.6px;color:#f2f2f2;transform:scaleX(1.0166);">Document</span>
<span class="t u" style="left:2271.25px;top:396.90px;font-size:14.6px;color:#f2f2f2;transform:scaleX(0.9598);">Find</span>
<span class="t u" style="left:2362.50px;top:396.90px;font-size:14.6px;color:#6c6c6c;transform:scaleX(0.9384);">Replace</span>
<span class="t u" style="left:2454.40px;top:396.90px;font-size:14.6px;color:#6c6c6c;transform:scaleX(0.9605);">Replace all</span>
<span class="t u" style="left:2241.00px;top:426.50px;font-size:14px;color:#9c9c9c;transform:scaleX(1.0778);">&lt;No results found&gt;</span>
<span class="t u" style="left:2259.20px;top:684.40px;font-size:14px;color:#f2f2f2;transform:scaleX(0.8922);">Layers</span>
<span class="t u" style="left:2309.50px;top:684.40px;font-size:14px;color:#bdbdbd;transform:scaleX(0.9338);">Character</span>
<span class="t u" style="left:2379.20px;top:684.40px;font-size:14px;color:#bdbdbd;transform:scaleX(0.9344);">Paragraph</span>
<span class="t u" style="left:2453.50px;top:684.40px;font-size:14px;color:#bdbdbd;transform:scaleX(0.9084);">Text Styles</span>
<span class="t u" style="left:2246.00px;top:723.25px;font-size:14px;color:#7e7e7e;transform:scaleX(0.8684);">Opacity:</span>
<span class="t u" style="left:2305.60px;top:724.50px;font-size:14px;color:#a8a8a8;transform:scaleX(0.9168);">100 %</span>
<span class="t u" style="left:2382.75px;top:723.90px;font-size:14px;color:#a8a8a8;transform:scaleX(0.9861);">Normal</span>
<span class="t u" style="left:2296.25px;top:765.75px;font-size:14px;color:#8c8c8c;transform:scaleX(1.0859);">Master A - Right</span>
<span class="t u" style="left:2259.40px;top:1213.90px;font-size:14px;color:#f2f2f2;transform:scaleX(0.9450);">Transform</span>
<span class="t u" style="left:2331.50px;top:1213.90px;font-size:14px;color:#bdbdbd;transform:scaleX(0.9880);">Navigator</span>
<span class="t u" style="left:2403.30px;top:1213.90px;font-size:14px;color:#bdbdbd;transform:scaleX(0.9802);">History</span>
<span class="t u" style="left:2315.00px;top:1261.00px;font-size:14px;color:#7a7a7a;transform:scaleX(0.8501);">X:</span>
<span class="t u" style="left:2338.75px;top:1261.00px;font-size:14px;color:#a0a0a0;transform:scaleX(0.9929);">0 mm</span>
<span class="t u" style="left:2426.25px;top:1261.00px;font-size:14px;color:#7a7a7a;transform:scaleX(0.9045);">W:</span>
<span class="t u" style="left:2455.00px;top:1261.00px;font-size:14px;color:#a0a0a0;transform:scaleX(0.9829);">0 mm</span>
<span class="t u" style="left:2315.00px;top:1291.00px;font-size:14px;color:#7a7a7a;transform:scaleX(0.8501);">Y:</span>
<span class="t u" style="left:2338.75px;top:1291.00px;font-size:14px;color:#a0a0a0;transform:scaleX(0.9929);">0 mm</span>
<span class="t u" style="left:2429.50px;top:1291.00px;font-size:14px;color:#7a7a7a;transform:scaleX(0.8643);">H:</span>
<span class="t u" style="left:2455.00px;top:1291.00px;font-size:14px;color:#a0a0a0;transform:scaleX(0.9829);">0 mm</span>
<span class="t u" style="left:2315.20px;top:1328.70px;font-size:14px;color:#7a7a7a;transform:scaleX(0.8000);">R:</span>
<span class="t u" style="left:2338.75px;top:1328.75px;font-size:14px;color:#a0a0a0;transform:scaleX(0.9635);">0 °</span>
<span class="t u" style="left:2432.50px;top:1328.75px;font-size:14px;color:#7a7a7a;transform:scaleX(0.7254);">S:</span>
<span class="t u" style="left:2455.00px;top:1328.75px;font-size:14px;color:#a0a0a0;transform:scaleX(0.9403);">0 °</span>
</body></html>
